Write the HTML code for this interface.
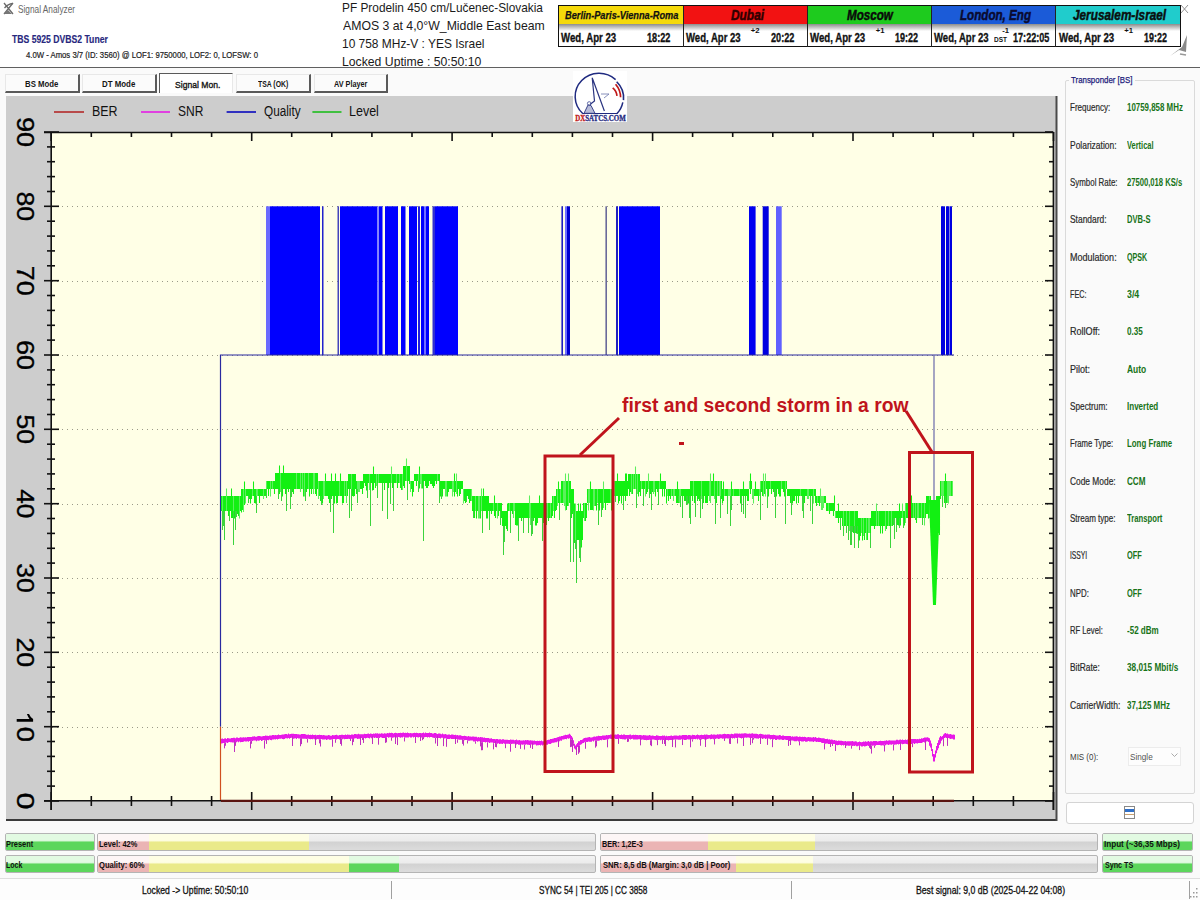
<!DOCTYPE html>
<html><head><meta charset="utf-8">
<style>
*{box-sizing:border-box}
html,body{margin:0;padding:0}
body{width:1200px;height:900px;position:relative;overflow:hidden;background:#fafafa;font-family:"Liberation Sans",sans-serif;}
.a{position:absolute;white-space:nowrap}
</style></head><body>
<div class="a" style="left:0;top:0;width:1200px;height:67px;background:#ffffff"></div><svg class="a" style="left:3px;top:2px" width="11" height="13" viewBox="0 0 11 13"><g stroke="#6a6a6a" stroke-width="1.3" fill="none"><path d="M1 1 L10 12 M10 1 L1 12"/><path d="M1.5 6 Q5 2 9.5 1.5"/></g><path d="M1 12 L5 8 L9 12 Z" fill="#777"/></svg><div class="a" style="left:17.59px;top:5px;font-size:10.17px;line-height:10.17px;color:#666;transform:scaleX(0.8147);transform-origin:0 0;">Signal Analyzer</div><div class="a" style="left:12.41px;top:35px;font-size:10.17px;line-height:10.17px;font-weight:bold;color:#28287e;transform:scaleX(0.8503);transform-origin:0 0;-webkit-text-stroke:0.15px #28287e;">TBS 5925 DVBS2 Tuner</div><div class="a" style="left:26.32px;top:51px;font-size:8.72px;line-height:8.72px;color:#222;transform:scaleX(0.8864);transform-origin:0 0;-webkit-text-stroke:0.2px #222;">4.0W - Amos 3/7 (ID: 3560) @ LOF1: 9750000, LOF2: 0, LOFSW: 0</div><div class="a" style="left:330px;top:0;width:230px;height:67px;overflow:hidden"><div class="a" style="left:11.92px;top:2px;font-size:12.06px;line-height:12.06px;color:#1a1a1a;transform:scaleX(0.9838);transform-origin:0 0;">PF Prodelin 450 cm/Lučenec-Slovakia</div><div class="a" style="left:12.90px;top:20px;font-size:12.06px;line-height:12.06px;color:#1a1a1a;transform:scaleX(1.0171);transform-origin:0 0;">AMOS 3 at 4,0°W_Middle East beam</div><div class="a" style="left:12.01px;top:38px;font-size:12.06px;line-height:12.06px;color:#1a1a1a;transform:scaleX(0.9909);transform-origin:0 0;">10 758 MHz-V : YES Israel</div><div class="a" style="left:11.89px;top:56px;font-size:12.06px;line-height:12.06px;color:#1a1a1a;transform:scaleX(1.0147);transform-origin:0 0;">Locked Uptime : 50:50:10</div></div><div class="a" style="left:558px;top:5px;width:623px;height:42px;border:1.5px solid #111;background:#fff"></div><div class="a" style="left:559px;top:6px;width:124px;height:18px;background:#f5d90a"></div><div class="a" style="left:559px;top:24px;width:124px;height:7px;background:linear-gradient(#8c8c8c,#e8e8e8 80%,#fff)"></div><div class="a" style="left:564.84px;top:10px;font-size:11.48px;line-height:11.48px;font-weight:bold;font-style:italic;color:#111;transform:scaleX(0.8041);transform-origin:0 0;-webkit-text-stroke:0.25px #111;">Berlin-Paris-Vienna-Roma</div><div class="a" style="left:683.5px;top:6px;width:123.5px;height:18px;background:#f21212"></div><div class="a" style="left:683.5px;top:24px;width:123.5px;height:7px;background:linear-gradient(#8c8c8c,#e8e8e8 80%,#fff)"></div><div class="a" style="left:682.5px;top:6px;width:1.5px;height:41px;background:#222"></div><div class="a" style="left:731.06px;top:8px;font-size:14.83px;line-height:14.83px;font-weight:bold;font-style:italic;color:#300000;transform:scaleX(0.8029);transform-origin:0 0;-webkit-text-stroke:0.5px #300000;">Dubai</div><div class="a" style="left:807.5px;top:6px;width:123.5px;height:18px;background:#1ecb1e"></div><div class="a" style="left:807.5px;top:24px;width:123.5px;height:7px;background:linear-gradient(#8c8c8c,#e8e8e8 80%,#fff)"></div><div class="a" style="left:806.5px;top:6px;width:1.5px;height:41px;background:#222"></div><div class="a" style="left:847.26px;top:8px;font-size:14.83px;line-height:14.83px;font-weight:bold;font-style:italic;color:#0a0a0a;transform:scaleX(0.7844);transform-origin:0 0;-webkit-text-stroke:0.5px #0a0a0a;">Moscow</div><div class="a" style="left:931.5px;top:6px;width:123.5px;height:18px;background:#1b5bd8"></div><div class="a" style="left:931.5px;top:24px;width:123.5px;height:7px;background:linear-gradient(#8c8c8c,#e8e8e8 80%,#fff)"></div><div class="a" style="left:930.5px;top:6px;width:1.5px;height:41px;background:#222"></div><div class="a" style="left:959.76px;top:8px;font-size:14.83px;line-height:14.83px;font-weight:bold;font-style:italic;color:#0a0a30;transform:scaleX(0.7842);transform-origin:0 0;-webkit-text-stroke:0.5px #0a0a30;">London, Eng</div><div class="a" style="left:1055.5px;top:6px;width:124.5px;height:18px;background:#20cccc"></div><div class="a" style="left:1055.5px;top:24px;width:124.5px;height:7px;background:linear-gradient(#8c8c8c,#e8e8e8 80%,#fff)"></div><div class="a" style="left:1054.5px;top:6px;width:1.5px;height:41px;background:#222"></div><div class="a" style="left:1072.84px;top:8px;font-size:14.83px;line-height:14.83px;font-weight:bold;font-style:italic;color:#0a1010;transform:scaleX(0.7956);transform-origin:0 0;-webkit-text-stroke:0.5px #0a1010;">Jerusalem-Israel</div><div class="a" style="left:561.30px;top:31px;font-size:13.37px;line-height:13.37px;font-weight:bold;color:#111;transform:scaleX(0.7218);transform-origin:0 0;-webkit-text-stroke:0.35px #111;">Wed, Apr 23</div><div class="a" style="left:646.65px;top:31px;font-size:13.37px;line-height:13.37px;font-weight:bold;color:#111;transform:scaleX(0.6839);transform-origin:0 0;-webkit-text-stroke:0.35px #111;">18:22</div><div class="a" style="left:686.40px;top:31px;font-size:13.37px;line-height:13.37px;font-weight:bold;color:#111;transform:scaleX(0.7152);transform-origin:0 0;-webkit-text-stroke:0.35px #111;">Wed, Apr 23</div><div class="a" style="left:771.26px;top:31px;font-size:13.37px;line-height:13.37px;font-weight:bold;color:#111;transform:scaleX(0.6837);transform-origin:0 0;-webkit-text-stroke:0.35px #111;">20:22</div><div class="a" style="left:750.70px;top:27px;font-size:7.70px;line-height:7.70px;font-weight:bold;color:#111;">+2</div><div class="a" style="left:810.00px;top:31px;font-size:13.37px;line-height:13.37px;font-weight:bold;color:#111;transform:scaleX(0.7218);transform-origin:0 0;-webkit-text-stroke:0.35px #111;">Wed, Apr 23</div><div class="a" style="left:895.26px;top:31px;font-size:13.37px;line-height:13.37px;font-weight:bold;color:#111;transform:scaleX(0.6748);transform-origin:0 0;-webkit-text-stroke:0.35px #111;">19:22</div><div class="a" style="left:875.70px;top:27px;font-size:7.70px;line-height:7.70px;font-weight:bold;color:#111;">+1</div><div class="a" style="left:934.25px;top:31px;font-size:13.37px;line-height:13.37px;font-weight:bold;color:#111;transform:scaleX(0.7152);transform-origin:0 0;-webkit-text-stroke:0.35px #111;">Wed, Apr 23</div><div class="a" style="left:1013.21px;top:31px;font-size:13.37px;line-height:13.37px;font-weight:bold;color:#111;transform:scaleX(0.6810);transform-origin:0 0;-webkit-text-stroke:0.35px #111;">17:22:05</div><div class="a" style="left:1002.20px;top:27px;font-size:7.70px;line-height:7.70px;font-weight:bold;color:#111;">-1</div><div class="a" style="left:1058.75px;top:31px;font-size:13.37px;line-height:13.37px;font-weight:bold;color:#111;transform:scaleX(0.7218);transform-origin:0 0;-webkit-text-stroke:0.35px #111;">Wed, Apr 23</div><div class="a" style="left:1144.47px;top:31px;font-size:13.37px;line-height:13.37px;font-weight:bold;color:#111;transform:scaleX(0.6687);transform-origin:0 0;-webkit-text-stroke:0.35px #111;">19:22</div><div class="a" style="left:1124.20px;top:27px;font-size:7.70px;line-height:7.70px;font-weight:bold;color:#111;">+1</div><div class="a" style="left:994.09px;top:36px;font-size:7.99px;line-height:7.99px;font-weight:bold;color:#111;transform:scaleX(0.8117);transform-origin:0 0;">DST</div><svg class="a" style="left:1180px;top:4px" width="9" height="10"><path d="M1 1 L8 9 M8 1 L1 9" stroke="#888" stroke-width="0.9"/></svg><svg class="a" style="left:1168px;top:34px" width="22" height="24"><path d="M19 1 L14 13 L2 22 L11 16 L18 18 Z" fill="#8a8a8a"/><path d="M12 20 L18 21" stroke="#999" stroke-width="1.6"/></svg><div class="a" style="left:0;top:67px;width:1200px;height:1.2px;background:#606060"></div><div class="a" style="left:5px;top:73.5px;width:74.5px;height:19.5px;background:#fbfbfb;border-top:1px solid #e8e8e8;border-left:1px solid #e8e8e8;border-right:2px solid #5a5a5a;border-bottom:2px solid #5a5a5a"></div><div class="a" style="left:25.02px;top:79px;font-size:9.74px;line-height:9.74px;font-weight:bold;color:#151515;transform:scaleX(0.8005);transform-origin:0 0;">BS Mode</div><div class="a" style="left:82px;top:73.5px;width:75px;height:19.5px;background:#fbfbfb;border-top:1px solid #e8e8e8;border-left:1px solid #e8e8e8;border-right:2px solid #5a5a5a;border-bottom:2px solid #5a5a5a"></div><div class="a" style="left:102.01px;top:79px;font-size:9.74px;line-height:9.74px;font-weight:bold;color:#151515;transform:scaleX(0.8105);transform-origin:0 0;">DT Mode</div><div class="a" style="left:158.5px;top:73px;width:74.5px;height:20px;background:#fff;border-top:1.6px solid #5a5a5a;border-left:1.2px solid #5a5a5a;border-right:1px solid #e8e8e8"></div><div class="a" style="left:174.57px;top:80px;font-size:9.88px;line-height:9.88px;color:#111;transform:scaleX(0.8694);transform-origin:0 0;-webkit-text-stroke:0.35px #111;">Signal Mon.</div><div class="a" style="left:236.3px;top:73.5px;width:74.5px;height:19.5px;background:#fbfbfb;border-top:1px solid #e8e8e8;border-left:1px solid #e8e8e8;border-right:2px solid #5a5a5a;border-bottom:2px solid #5a5a5a"></div><div class="a" style="left:258.23px;top:79px;font-size:9.74px;line-height:9.74px;font-weight:bold;color:#151515;transform:scaleX(0.7038);transform-origin:0 0;">TSA (OK)</div><div class="a" style="left:313.8px;top:73.5px;width:74.19999999999999px;height:19.5px;background:#fbfbfb;border-top:1px solid #e8e8e8;border-left:1px solid #e8e8e8;border-right:2px solid #5a5a5a;border-bottom:2px solid #5a5a5a"></div><div class="a" style="left:334.05px;top:79px;font-size:9.74px;line-height:9.74px;font-weight:bold;color:#151515;transform:scaleX(0.7466);transform-origin:0 0;">AV Player</div><svg class="a" style="left:0;top:0" width="1200" height="900"><rect x="6" y="96" width="1051" height="724" fill="#cdcdcd"/><line x1="6" y1="820" x2="1057" y2="820" stroke="#3a3a3a" stroke-width="2"/><line x1="1056.5" y1="96" x2="1056.5" y2="821" stroke="#4a4a4a" stroke-width="2"/><rect x="51" y="132" width="1003" height="669" fill="#ffffe6"/><line x1="52" y1="727.5" x2="1053" y2="727.5" stroke="#9a9a88" stroke-width="1" stroke-dasharray="1 4"/><line x1="52" y1="652.5" x2="1053" y2="652.5" stroke="#9a9a88" stroke-width="1" stroke-dasharray="1 4"/><line x1="52" y1="578.5" x2="1053" y2="578.5" stroke="#9a9a88" stroke-width="1" stroke-dasharray="1 4"/><line x1="52" y1="504.5" x2="1053" y2="504.5" stroke="#9a9a88" stroke-width="1" stroke-dasharray="1 4"/><line x1="52" y1="429.5" x2="1053" y2="429.5" stroke="#9a9a88" stroke-width="1" stroke-dasharray="1 4"/><line x1="52" y1="355.5" x2="1053" y2="355.5" stroke="#9a9a88" stroke-width="1" stroke-dasharray="1 4"/><line x1="52" y1="281.5" x2="1053" y2="281.5" stroke="#9a9a88" stroke-width="1" stroke-dasharray="1 4"/><line x1="52" y1="206.5" x2="1053" y2="206.5" stroke="#9a9a88" stroke-width="1" stroke-dasharray="1 4"/><rect x="266" y="206.3" width="4.0" height="148.7" fill="#6a6aff"/><rect x="270" y="206.3" width="50.0" height="148.7" fill="#0000ff"/><rect x="322" y="206.3" width="1.5" height="148.7" fill="#2222cc"/><rect x="337.5" y="206.3" width="1.5" height="148.7" fill="#4444bb"/><rect x="340" y="206.3" width="37.5" height="148.7" fill="#0000ff"/><rect x="377.5" y="206.3" width="1.5" height="148.7" fill="#8888ff"/><rect x="379" y="206.3" width="3.5" height="148.7" fill="#0000ff"/><rect x="385" y="206.3" width="13.0" height="148.7" fill="#0000ff"/><rect x="401" y="206.3" width="4.5" height="148.7" fill="#0000ff"/><rect x="409" y="206.3" width="8.0" height="148.7" fill="#0000ff"/><rect x="418" y="206.3" width="2.0" height="148.7" fill="#2020e0"/><rect x="421" y="206.3" width="3.0" height="148.7" fill="#0000ff"/><rect x="424" y="206.3" width="2.0" height="148.7" fill="#7070ff"/><rect x="426" y="206.3" width="3.0" height="148.7" fill="#0000ff"/><rect x="432.5" y="206.3" width="2.5" height="148.7" fill="#3030d0"/><rect x="435" y="206.3" width="23.0" height="148.7" fill="#0000ff"/><rect x="561.4" y="206.3" width="1.6" height="148.7" fill="#2020c0"/><rect x="565" y="206.3" width="2.0" height="148.7" fill="#7070ff"/><rect x="567" y="206.3" width="3.0" height="148.7" fill="#0000d0"/><rect x="605.4" y="206.3" width="1.6" height="148.7" fill="#6a6a9a"/><rect x="616" y="206.3" width="2.0" height="148.7" fill="#2020c0"/><rect x="619" y="206.3" width="41.0" height="148.7" fill="#0000ff"/><rect x="749" y="206.3" width="6.6" height="148.7" fill="#0000f0"/><rect x="762.7" y="206.3" width="6.0" height="148.7" fill="#0000e0"/><rect x="776" y="206.3" width="5.7" height="148.7" fill="#6060ff"/><rect x="941" y="206.3" width="4.0" height="148.7" fill="#0000e0"/><rect x="946" y="206.3" width="3.0" height="148.7" fill="#0000e0"/><rect x="949.5" y="206.3" width="2.5" height="148.7" fill="#0000e0"/><polyline points="220.5,726.7 220.5,355.0 954,355.0" fill="none" stroke="#2a2aa0" stroke-width="1.2"/><line x1="934" y1="355.0" x2="934" y2="504" stroke="#6a6aaa" stroke-width="1.2"/><line x1="220.5" y1="801" x2="220.5" y2="726.7" stroke="#d05020" stroke-width="1.2"/><path d="M221.5,496.0V511.0M223.5,496.0V511.0M224.5,496.0V514.0M225.5,496.0V511.0M227.5,496.0V511.0M228.5,496.0V516.0M229.5,496.0V511.0M230.5,496.0V511.0M231.5,488.6V518.0M232.5,496.0V518.0M234.5,496.0V518.4M235.5,496.0V511.0M236.5,496.0V511.0M237.5,496.0V514.0M238.5,496.0V516.0M240.5,496.0V511.0M241.5,489.0V512.4M242.5,489.0V510.0M244.5,481.6V505.0M246.5,489.0V496.0M247.5,489.0V496.0M248.5,489.0V496.0M249.5,489.0V499.0M250.5,489.0V503.4M251.5,489.0V499.0M253.5,481.6V496.0M254.5,489.0V503.0M255.5,489.0V503.4M258.5,489.0V496.0M259.5,489.0V503.0M260.5,489.0V496.0M261.5,489.0V496.0M262.5,489.0V496.0M264.5,489.0V496.0M265.5,489.0V496.0M267.5,481.0V489.0M268.5,481.0V496.0M269.5,481.0V489.0M271.5,481.0V489.0M273.5,481.0V489.0M274.5,481.0V494.0M275.5,473.0V489.0M276.5,473.0V489.0M277.5,473.0V489.0M278.5,473.0V496.0M279.5,465.6V494.0M281.5,473.0V489.0M282.5,473.0V496.4M283.5,465.6V489.0M284.5,473.0V489.0M285.5,473.0V494.0M286.5,473.0V496.4M287.5,473.0V489.0M288.5,473.0V492.0M289.5,473.0V489.0M290.5,473.0V489.0M291.5,473.0V496.4M292.5,473.0V492.0M293.5,473.0V494.0M294.5,473.0V489.0M295.5,473.0V489.0M297.5,473.0V489.0M298.5,473.0V489.0M299.5,473.0V489.0M301.5,473.0V489.0M303.5,473.0V496.4M305.5,473.0V496.0M306.5,473.0V492.0M307.5,473.0V489.0M309.5,473.0V496.4M310.5,473.0V489.0M311.5,473.0V494.0M312.5,473.0V489.0M315.5,473.0V494.0M316.5,473.0V496.0M317.5,473.0V489.0M319.5,481.0V496.0M320.5,481.0V501.0M321.5,481.0V499.0M322.5,481.0V503.4M325.5,473.6V496.0M326.5,481.0V496.0M327.5,481.0V496.0M328.5,481.0V499.0M329.5,481.0V503.0M330.5,481.0V496.0M331.5,473.6V499.0M332.5,481.0V496.0M333.5,481.0V503.4M334.5,481.0V503.4M335.5,473.6V496.0M336.5,481.0V503.4M337.5,481.0V503.0M338.5,481.0V496.0M340.5,473.6V496.0M341.5,481.0V496.0M342.5,481.0V503.4M343.5,481.0V503.0M345.5,481.0V496.0M347.5,481.0V496.0M348.5,474.0V489.0M349.5,474.0V489.0M350.5,474.0V489.0M352.5,474.0V496.0M353.5,474.0V496.4M354.5,474.0V496.0M355.5,474.0V489.0M356.5,481.0V494.0M360.5,481.0V489.0M361.5,481.0V489.0M362.5,481.0V494.0M363.5,474.0V488.0M364.5,474.0V483.0M365.5,474.0V486.0M366.5,474.0V490.4M367.5,474.0V490.0M368.5,474.0V483.0M370.5,474.0V483.0M371.5,474.0V483.0M372.5,474.0V490.4M373.5,466.6V490.0M374.5,474.0V483.0M375.5,474.0V488.0M377.5,474.0V486.0M379.5,474.0V483.0M380.5,474.0V483.0M381.5,474.0V483.0M382.5,474.0V490.0M383.5,474.0V483.0M384.5,474.0V490.0M385.5,474.0V483.0M386.5,474.0V483.0M387.5,474.0V488.0M388.5,474.0V488.0M389.5,474.0V483.0M390.5,474.0V488.0M392.5,474.0V488.0M393.5,474.0V490.0M394.5,474.0V483.0M395.5,474.0V483.0M397.5,474.0V488.0M398.5,474.0V483.0M400.5,474.0V488.0M401.5,474.0V490.0M403.5,466.0V486.0M404.5,466.0V488.0M405.5,466.0V481.0M407.5,466.0V481.0M408.5,466.0V481.0M409.5,466.0V484.0M411.5,481.0V489.0M412.5,481.0V496.4M413.5,481.0V492.0M414.5,474.0V481.0M415.5,474.0V481.0M416.5,474.0V486.0M417.5,474.0V481.0M419.5,466.6V488.4M422.5,474.0V488.4M423.5,474.0V481.0M424.5,474.0V481.0M425.5,474.0V486.0M426.5,474.0V488.0M427.5,474.0V488.0M428.5,474.0V486.0M429.5,474.0V481.0M430.5,474.0V484.0M431.5,474.0V484.0M432.5,474.0V486.0M433.5,474.0V488.0M434.5,474.0V486.0M435.5,474.0V481.0M436.5,474.0V484.0M438.5,474.0V481.0M439.5,474.0V481.0M440.5,481.0V496.4M441.5,481.0V489.0M442.5,481.0V496.4M443.5,481.0V489.0M444.5,481.0V489.0M447.5,481.0V496.4M448.5,481.0V492.0M449.5,481.0V489.0M450.5,481.0V489.0M451.5,481.0V489.0M454.5,473.6V496.4M455.5,481.0V492.0M457.5,481.0V496.4M458.5,481.0V489.0M459.5,481.0V496.0M460.5,481.0V494.0M461.5,481.0V489.0M462.5,481.0V489.0M464.5,489.0V501.0M465.5,489.0V503.0M466.5,489.0V496.0M467.5,489.0V496.0M468.5,489.0V499.0M469.5,489.0V503.0M470.5,489.0V501.0M472.5,496.0V511.0M473.5,496.0V518.0M474.5,496.0V518.0M476.5,496.0V518.4M477.5,496.0V511.0M480.5,496.0V518.4M482.5,496.0V511.0M483.5,488.6V511.0M484.5,496.0V511.0M485.5,496.0V511.0M486.5,496.0V518.4M487.5,496.0V518.4M488.5,496.0V511.0M489.5,503.0V518.4M490.5,503.0V511.0M491.5,503.0V514.0M492.5,503.0V511.0M494.5,495.6V516.0M495.5,503.0V518.0M496.5,503.0V511.0M498.5,503.0V516.0M499.5,503.0V511.0M500.5,503.0V518.4M501.5,503.0V518.0M502.5,511.0V526.0M503.5,511.0V529.0M504.5,511.0V531.0M505.5,511.0V526.0M506.5,511.0V529.0M507.5,503.6V531.0M508.5,503.0V511.0M510.5,503.0V518.4M511.5,503.0V511.0M512.5,503.0V514.0M515.5,503.0V525.0M516.5,503.0V525.4M517.5,503.0V525.4M518.5,503.0V518.0M519.5,503.0V518.0M520.5,503.0V518.0M521.5,503.0V521.0M522.5,503.0V518.0M523.5,503.0V521.0M524.5,503.0V518.0M525.5,503.0V518.0M526.5,503.0V518.0M527.5,503.0V518.0M528.5,503.0V518.0M531.5,503.0V525.0M532.5,503.0V525.4M533.5,503.0V521.0M534.5,503.0V518.0M535.5,503.0V525.4M536.5,503.0V525.4M537.5,503.0V523.0M538.5,503.0V518.0M539.5,495.6V518.0M540.5,503.0V518.0M541.5,503.0V518.0M542.5,503.0V518.0M543.5,503.0V523.0M544.5,503.0V518.0M546.5,503.0V525.0M548.5,503.0V521.0M549.5,503.0V518.0M551.5,503.0V518.0M552.5,496.0V516.0M554.5,496.0V518.0M555.5,496.0V511.0M556.5,489.0V510.0M558.5,481.6V503.0M559.5,489.0V503.0M561.5,481.0V503.0M562.5,481.0V503.0M566.5,481.0V510.0M567.5,481.0V506.0M569.5,481.0V503.0M570.5,481.0V503.0M571.5,489.0V518.0M572.5,489.0V514.0M573.5,489.0V514.0M574.5,503.6V543.0M576.5,511.0V540.0M577.5,511.0V540.0M578.5,503.6V540.0M579.5,511.0V540.0M580.5,503.6V540.0M581.5,511.0V547.4M582.5,511.0V540.0M583.5,503.0V518.0M585.5,503.0V521.0M586.5,503.0V518.0M587.5,489.0V503.0M590.5,481.6V510.0M591.5,489.0V510.0M592.5,489.0V510.0M595.5,489.0V506.0M596.5,489.0V510.4M598.5,489.0V510.0M599.5,489.0V510.4M600.5,489.0V503.0M601.5,489.0V508.0M602.5,489.0V510.0M604.5,489.0V503.0M605.5,489.0V510.0M606.5,489.0V503.0M607.5,489.0V503.0M608.5,489.0V503.0M609.5,489.0V503.0M611.5,489.0V510.4M612.5,473.6V501.0M613.5,481.0V496.0M615.5,481.0V496.0M616.5,481.0V496.0M617.5,473.6V496.0M618.5,481.0V503.4M619.5,481.0V501.0M620.5,481.0V496.0M621.5,481.0V503.4M622.5,481.0V496.0M623.5,481.0V496.0M624.5,481.0V496.0M625.5,473.6V501.0M626.5,473.6V496.0M627.5,481.0V496.0M628.5,474.0V489.0M629.5,474.0V496.0M630.5,474.0V492.0M632.5,474.0V494.0M634.5,474.0V489.0M636.5,474.0V489.0M638.5,474.0V496.4M639.5,474.0V492.0M640.5,481.0V496.0M642.5,481.0V489.0M643.5,481.0V489.0M644.5,481.0V489.0M646.5,481.0V494.0M647.5,481.0V492.0M649.5,481.0V496.4M650.5,481.0V494.0M651.5,481.0V489.0M652.5,481.0V492.0M655.5,481.0V496.4M656.5,481.0V489.0M657.5,481.0V492.0M658.5,481.0V489.0M660.5,473.6V489.0M661.5,481.0V489.0M662.5,481.0V496.4M663.5,481.0V489.0M664.5,481.0V496.4M665.5,481.0V489.0M666.5,489.0V503.4M668.5,489.0V501.0M669.5,489.0V496.0M670.5,489.0V499.0M672.5,489.0V496.0M675.5,489.0V496.0M676.5,489.0V503.0M677.5,481.6V503.0M678.5,489.0V503.0M681.5,489.0V496.0M682.5,489.0V499.0M683.5,489.0V496.0M684.5,489.0V501.0M685.5,489.0V501.0M686.5,489.0V496.0M687.5,489.0V503.0M688.5,489.0V503.4M689.5,489.0V496.0M690.5,481.0V496.0M691.5,481.0V496.0M692.5,481.0V501.0M694.5,481.0V503.0M695.5,481.0V496.0M696.5,481.0V496.0M697.5,481.0V501.0M698.5,481.0V499.0M699.5,481.0V501.0M700.5,481.0V496.0M702.5,481.0V503.0M703.5,481.0V503.0M704.5,481.0V496.0M705.5,481.0V503.0M706.5,481.0V503.0M707.5,481.0V503.0M708.5,481.0V496.0M711.5,481.0V496.0M712.5,481.0V496.0M713.5,473.6V496.0M715.5,481.0V501.0M716.5,481.0V503.0M718.5,481.0V496.0M721.5,481.0V499.0M722.5,489.0V503.4M723.5,481.6V501.0M725.5,489.0V496.0M726.5,489.0V496.0M727.5,489.0V501.0M731.5,481.6V503.0M732.5,489.0V496.0M734.5,489.0V496.0M735.5,489.0V496.0M736.5,489.0V496.0M737.5,489.0V496.0M738.5,489.0V496.0M740.5,489.0V503.4M741.5,489.0V496.0M742.5,489.0V496.0M743.5,481.6V503.4M744.5,489.0V496.0M745.5,489.0V499.0M746.5,489.0V496.0M747.5,489.0V501.0M748.5,489.0V501.0M750.5,473.6V494.0M751.5,481.0V489.0M754.5,489.0V496.0M755.5,481.6V496.0M756.5,489.0V496.0M757.5,489.0V496.0M758.5,489.0V501.0M761.5,481.0V492.0M762.5,481.0V496.0M764.5,481.0V494.0M766.5,481.0V489.0M767.5,481.0V494.0M768.5,481.0V496.4M769.5,481.0V489.0M771.5,481.0V494.0M772.5,481.0V489.0M773.5,481.0V492.0M774.5,481.0V489.0M775.5,481.0V496.4M776.5,481.0V496.4M777.5,481.0V489.0M778.5,481.0V494.0M779.5,481.0V496.4M780.5,481.0V496.4M782.5,481.0V489.0M783.5,481.0V492.0M784.5,481.0V496.4M786.5,481.0V489.0M787.5,489.0V496.0M788.5,489.0V496.0M789.5,489.0V496.0M790.5,489.0V503.0M791.5,489.0V496.0M792.5,489.0V503.4M793.5,489.0V501.0M794.5,489.0V501.0M795.5,489.0V496.0M796.5,489.0V503.4M797.5,489.0V496.0M798.5,489.0V503.0M799.5,489.0V496.0M801.5,489.0V496.0M802.5,489.0V496.0M803.5,489.0V496.0M804.5,489.0V503.0M805.5,489.0V496.0M806.5,489.0V496.0M809.5,489.0V496.0M810.5,489.0V501.0M811.5,489.0V496.0M812.5,489.0V496.0M814.5,489.0V496.0M815.5,489.0V503.0M816.5,496.0V506.0M818.5,496.0V503.0M819.5,496.0V506.0M824.5,496.0V503.0M825.5,496.0V503.0M826.5,503.0V511.0M827.5,503.0V511.0M829.5,503.0V514.0M830.5,503.0V511.0M831.5,503.0V511.0M832.5,503.0V511.0M833.5,503.0V516.0M834.5,495.6V511.0M836.5,511.0V518.0M837.5,511.0V518.0M838.5,503.6V523.0M839.5,511.0V518.0M840.5,511.0V518.0M841.5,511.0V518.0M842.5,511.0V526.0M844.5,511.0V526.0M845.5,511.0V526.0M847.5,511.0V526.0M848.5,511.0V531.0M850.5,511.0V533.0M851.5,511.0V533.4M852.5,511.0V526.0M853.5,511.0V533.0M855.5,511.0V531.0M856.5,511.0V533.4M857.5,511.0V526.0M858.5,518.0V538.0M859.5,518.0V540.4M860.5,518.0V536.0M862.5,518.0V540.4M864.5,518.0V540.0M865.5,518.0V533.0M867.5,518.0V540.0M870.5,518.0V533.0M871.5,511.0V526.0M872.5,511.0V526.0M873.5,511.0V526.0M874.5,511.0V529.0M875.5,511.0V526.0M877.5,511.0V526.0M879.5,511.0V526.0M880.5,511.0V533.4M881.5,511.0V526.0M882.5,511.0V533.4M883.5,511.0V526.0M884.5,511.0V526.0M886.5,511.0V529.0M887.5,511.0V526.0M889.5,511.0V526.0M890.5,511.0V533.0M892.5,511.0V526.0M893.5,511.0V518.0M894.5,511.0V525.0M895.5,511.0V518.0M896.5,511.0V523.0M897.5,511.0V525.0M898.5,511.0V525.4M899.5,503.6V521.0M900.5,511.0V525.4M901.5,511.0V518.0M903.5,511.0V521.0M904.5,511.0V525.4M906.5,503.0V518.0M907.5,503.0V518.0M908.5,503.0V518.0M910.5,503.0V521.0M911.5,495.6V518.0M912.5,503.0V518.0M914.5,503.0V518.0M916.5,503.0V523.0M919.5,503.0V518.0M920.5,503.0V518.0M922.5,503.0V518.0M923.5,503.0V518.0M925.5,503.0V518.0M926.5,496.0V514.0M927.5,496.0V514.0M928.5,496.0V518.4M930.5,496.0V514.0M936.5,496.0V537.4M937.5,496.0V530.0M938.5,496.0V533.0M939.5,496.0V535.0M940.5,481.0V499.0M944.5,481.0V503.0M945.5,473.6V503.4M946.5,481.0V503.0M951.5,481.0V496.0" stroke="#12f012" stroke-width="1.05" fill="none"/><path d="M222.5,496.0V511.0M226.5,488.6V511.0M233.5,496.0V516.0M239.5,496.0V518.4M243.5,489.0V512.0M245.5,489.0V503.4M252.5,489.0V496.0M256.5,489.0V496.0M257.5,489.0V496.0M263.5,489.0V499.0M266.5,481.0V492.0M270.5,481.0V496.4M272.5,481.0V489.0M280.5,473.0V492.0M296.5,473.0V489.0M300.5,473.0V492.0M302.5,473.0V489.0M304.5,473.0V496.4M308.5,473.0V489.0M313.5,473.0V494.0M314.5,473.0V489.0M318.5,481.0V499.0M323.5,481.0V499.0M324.5,481.0V496.0M339.5,481.0V496.0M344.5,481.0V496.0M346.5,481.0V503.0M351.5,474.0V489.0M357.5,481.0V494.0M358.5,481.0V492.0M359.5,481.0V492.0M369.5,474.0V490.0M376.5,474.0V486.0M378.5,474.0V483.0M391.5,466.6V483.0M396.5,474.0V483.0M399.5,474.0V483.0M402.5,474.0V490.0M406.5,458.6V481.0M410.5,481.0V492.0M418.5,474.0V481.0M420.5,474.0V484.0M421.5,474.0V488.4M437.5,474.0V481.0M445.5,481.0V496.4M446.5,481.0V496.4M452.5,481.0V496.4M453.5,481.0V492.0M456.5,473.6V494.0M463.5,489.0V503.4M471.5,489.0V501.0M475.5,496.0V511.0M478.5,496.0V518.4M479.5,496.0V518.4M481.5,488.6V511.0M493.5,503.0V511.0M497.5,503.0V518.4M509.5,503.0V511.0M513.5,503.0V518.0M514.5,503.0V511.0M529.5,495.6V518.0M530.5,503.0V525.0M545.5,503.0V525.0M547.5,503.0V518.0M550.5,503.0V518.0M553.5,496.0V511.0M557.5,489.0V506.0M560.5,489.0V503.0M563.5,481.0V503.0M564.5,481.0V506.0M565.5,473.6V510.4M568.5,473.6V506.0M575.5,503.6V545.0M584.5,503.0V521.0M588.5,489.0V510.4M589.5,489.0V503.0M593.5,489.0V510.4M594.5,489.0V506.0M597.5,489.0V503.0M603.5,481.6V508.0M610.5,489.0V503.0M614.5,481.0V496.0M631.5,474.0V494.0M633.5,474.0V489.0M635.5,466.6V489.0M637.5,474.0V494.0M641.5,481.0V489.0M645.5,481.0V496.4M648.5,473.6V489.0M653.5,481.0V494.0M654.5,481.0V492.0M659.5,481.0V489.0M667.5,489.0V496.0M671.5,489.0V496.0M673.5,489.0V501.0M674.5,489.0V496.0M679.5,489.0V503.0M680.5,489.0V496.0M693.5,481.0V496.0M701.5,481.0V499.0M709.5,481.0V501.0M710.5,473.6V503.0M714.5,481.0V499.0M717.5,481.0V496.0M719.5,481.0V496.0M720.5,481.0V496.0M724.5,489.0V496.0M728.5,489.0V496.0M729.5,489.0V496.0M730.5,489.0V496.0M733.5,489.0V496.0M739.5,489.0V496.0M749.5,481.0V489.0M752.5,489.0V499.0M753.5,489.0V503.4M759.5,489.0V496.0M760.5,481.0V489.0M763.5,473.6V496.4M765.5,473.6V496.4M770.5,481.0V489.0M781.5,481.0V489.0M785.5,481.0V496.0M800.5,489.0V496.0M807.5,489.0V499.0M808.5,489.0V499.0M813.5,489.0V503.4M817.5,496.0V503.0M820.5,488.6V503.0M821.5,496.0V510.0M822.5,496.0V510.0M823.5,496.0V508.0M828.5,503.0V511.0M835.5,511.0V518.0M843.5,511.0V531.0M846.5,511.0V526.0M849.5,511.0V531.0M854.5,511.0V526.0M861.5,518.0V533.0M863.5,518.0V536.0M866.5,518.0V540.0M868.5,518.0V533.0M869.5,518.0V533.0M876.5,503.6V526.0M878.5,511.0V526.0M885.5,511.0V531.0M888.5,511.0V526.0M891.5,511.0V526.0M902.5,503.6V518.0M905.5,503.0V523.0M909.5,503.0V518.0M913.5,503.0V518.0M915.5,503.0V518.0M917.5,503.0V518.0M918.5,503.0V518.0M921.5,503.0V518.0M924.5,503.0V525.4M929.5,496.0V518.0M941.5,481.0V496.0M942.5,481.0V503.4M943.5,481.0V496.0M947.5,481.0V503.0M948.5,481.0V503.4M949.5,481.0V496.0M950.5,481.0V496.0M952.5,481.0V496.0" stroke="#5cf05c" stroke-width="1.05" fill="none"/><path d="M222.5,511.0V530M223.5,511.0V526M224.5,511.0V540M229.5,511.0V521M233.5,511.0V545M235.5,511.0V530M236.5,511.0V517M248.5,496.0V503M256.5,496.0V513M266.5,489.0V498M278.5,489.0V499M281.5,489.0V501M286.5,489.0V511M290.5,489.0V509M291.5,489.0V497M305.5,489.0V501M321.5,496.0V505M330.5,496.0V512M333.5,496.0V533M349.5,489.0V518M351.5,489.0V511M357.5,489.0V503M367.5,483.0V498M370.5,483.0V526M377.5,483.0V498M382.5,483.0V511M387.5,483.0V519M390.5,483.0V504M393.5,483.0V511M407.5,481.0V500M418.5,481.0V492M423.5,481.0V541M439.5,481.0V503M441.5,489.0V499M466.5,496.0V502M473.5,511.0V518M482.5,511.0V533M489.5,511.0V530M500.5,511.0V525M503.5,526.0V555M504.5,526.0V542M510.5,511.0V533M518.5,518.0V541M523.5,518.0V533M528.5,518.0V533M531.5,518.0V536M532.5,518.0V534M542.5,518.0V541M545.5,518.0V528M559.5,503.0V520M570.5,503.0V562M573.5,511.0V562M575.5,540.0V549M576.5,540.0V583M579.5,540.0V558M580.5,540.0V562M598.5,503.0V525M601.5,503.0V517M615.5,496.0V502M623.5,496.0V510M636.5,489.0V508M643.5,489.0V506M649.5,489.0V498M651.5,489.0V510M658.5,489.0V505M678.5,496.0V502M680.5,496.0V507M682.5,496.0V518M686.5,496.0V505M687.5,496.0V504M689.5,496.0V518M690.5,496.0V524M695.5,496.0V517M700.5,496.0V518M702.5,496.0V509M715.5,496.0V524M720.5,496.0V518M727.5,496.0V514M730.5,496.0V526M731.5,496.0V510M741.5,496.0V512M743.5,496.0V514M745.5,496.0V518M760.5,489.0V520M767.5,489.0V508M774.5,489.0V497M775.5,489.0V518M785.5,489.0V524M791.5,496.0V515M802.5,496.0V511M803.5,496.0V518M810.5,496.0V511M812.5,496.0V524M840.5,518.0V530M843.5,526.0V536M846.5,526.0V533M848.5,526.0V540M850.5,526.0V545M851.5,526.0V545M852.5,526.0V532M854.5,526.0V548M855.5,526.0V533M857.5,526.0V534M858.5,533.0V548M870.5,533.0V548M890.5,526.0V548M893.5,518.0V525M894.5,518.0V539M896.5,518.0V532M899.5,518.0V528M903.5,518.0V528M910.5,518.0V530M915.5,518.0V520M922.5,518.0V525M942.5,496.0V507M945.5,496.0V508" stroke="#3cd43c" stroke-width="1" fill="none"/><polygon points="929,500 933,605 936,605 940,500" fill="#12f012"/><path d="M221.5,738.8V743.4M222.5,738.4V743.3M223.5,739.1V743.0M224.5,738.5V743.4M225.5,738.3V742.8M226.5,738.9V742.5M227.5,738.1V743.0M228.5,738.2V742.3M229.5,738.6V742.1M230.5,738.5V742.3M231.5,737.9V742.3M232.5,738.1V742.6M233.5,737.7V742.5M234.5,737.7V742.1M235.5,738.2V741.9M236.5,737.6V742.2M237.5,737.6V741.6M238.5,737.9V742.2M239.5,737.7V741.6M240.5,737.2V742.3M241.5,737.6V741.9M242.5,737.5V742.1M243.5,737.2V741.8M244.5,737.6V741.3M245.5,737.3V741.5M246.5,737.4V741.4M247.5,736.9V741.3M248.5,737.1V741.8M249.5,736.9V741.1M250.5,737.1V741.4M251.5,737.0V740.8M252.5,736.6V740.9M253.5,736.5V740.6M254.5,736.3V740.4M255.5,736.7V740.6M256.5,736.8V741.3M257.5,736.2V740.5M258.5,736.0V740.7M259.5,736.0V740.5M260.5,736.3V740.1M261.5,736.4V740.9M262.5,736.3V740.4M263.5,735.9V740.1M264.5,736.0V740.6M265.5,735.5V740.6M266.5,735.8V739.9M267.5,735.7V740.0M268.5,736.0V740.2M269.5,735.5V739.4M270.5,735.4V739.9M271.5,735.6V740.2M272.5,734.9V739.4M273.5,734.9V739.5M274.5,735.3V739.2M275.5,735.1V739.5M276.5,735.2V739.1M277.5,735.0V739.6M278.5,734.5V739.1M279.5,734.9V738.7M280.5,734.9V738.8M281.5,734.8V738.5M282.5,734.6V738.9M283.5,734.4V739.2M284.5,734.3V739.0M285.5,733.9V738.3M286.5,734.1V738.2M287.5,734.4V738.6M288.5,733.6V738.0M289.5,734.3V738.7M290.5,733.9V738.1M291.5,733.8V737.8M292.5,733.8V738.2M293.5,733.7V738.7M294.5,733.9V738.4M295.5,734.1V738.2M296.5,734.1V738.9M297.5,734.3V738.1M298.5,734.2V738.6M299.5,734.5V738.4M300.5,734.5V738.2M301.5,734.0V738.1M302.5,734.0V738.7M303.5,734.1V738.8M304.5,734.1V738.7M305.5,734.3V738.7M306.5,734.8V738.9M307.5,734.7V738.6M308.5,734.6V738.7M309.5,734.9V739.1M310.5,734.8V739.3M311.5,735.1V739.0M312.5,734.4V739.3M313.5,735.0V738.7M314.5,735.0V739.2M315.5,734.7V739.3M316.5,735.2V739.5M317.5,734.9V739.1M318.5,734.9V739.2M319.5,734.8V739.4M320.5,735.0V739.5M321.5,735.0V738.9M322.5,735.2V739.5M323.5,735.1V739.4M324.5,735.3V739.4M325.5,735.5V739.3M326.5,735.6V739.9M327.5,735.4V739.4M328.5,735.0V739.3M329.5,735.3V739.7M330.5,735.7V739.8M331.5,735.7V739.4M332.5,735.1V739.8M333.5,735.3V739.1M334.5,735.2V739.1M335.5,735.1V739.8M336.5,734.7V739.6M337.5,735.3V739.1M338.5,735.4V739.0M339.5,734.9V739.5M340.5,734.9V738.9M341.5,734.8V738.7M342.5,734.8V739.2M343.5,734.9V738.7M344.5,735.1V739.2M345.5,734.4V739.1M346.5,734.9V739.0M347.5,734.4V739.0M348.5,734.8V738.8M349.5,734.8V739.1M350.5,734.9V739.0M351.5,734.5V738.7M352.5,734.5V739.2M353.5,734.8V738.9M354.5,734.0V738.6M355.5,734.1V738.2M356.5,734.3V738.3M357.5,734.3V738.9M358.5,733.8V738.7M359.5,734.2V738.7M360.5,734.3V738.5M361.5,734.2V737.9M362.5,734.2V738.0M363.5,734.3V738.0M364.5,733.8V738.1M365.5,734.0V738.6M366.5,734.0V738.1M367.5,733.7V737.7M368.5,733.5V738.1M369.5,734.1V738.4M370.5,733.6V737.6M371.5,733.8V738.3M372.5,734.0V737.5M373.5,733.4V737.6M374.5,733.8V737.9M375.5,733.2V737.4M376.5,733.5V738.0M377.5,733.2V738.0M378.5,733.8V737.7M379.5,733.5V738.1M380.5,733.7V737.3M381.5,733.2V737.5M382.5,733.4V737.9M383.5,733.7V738.0M384.5,733.3V738.1M385.5,733.5V737.9M386.5,733.6V737.3M387.5,733.0V737.1M388.5,733.3V737.7M389.5,732.8V737.2M390.5,733.1V737.2M391.5,732.8V737.7M392.5,733.0V737.8M393.5,733.5V737.4M394.5,733.0V737.2M395.5,732.8V737.7M396.5,733.0V737.6M397.5,733.3V737.1M398.5,733.1V737.1M399.5,732.9V737.2M400.5,732.7V737.7M401.5,733.1V737.2M402.5,732.7V737.5M403.5,732.6V736.8M404.5,733.0V737.5M405.5,732.8V737.5M406.5,732.9V737.5M407.5,732.5V737.4M408.5,733.1V737.5M409.5,733.2V736.8M410.5,733.1V737.4M411.5,733.2V737.5M412.5,733.3V736.8M413.5,733.0V737.6M414.5,732.8V736.9M415.5,733.0V737.0M416.5,732.8V736.9M417.5,733.1V737.3M418.5,733.2V737.5M419.5,733.0V737.0M420.5,733.1V737.3M421.5,733.3V737.4M422.5,732.9V737.2M423.5,732.6V737.1M424.5,733.3V737.3M425.5,732.6V737.1M426.5,733.1V736.9M427.5,733.0V737.5M428.5,733.0V736.9M429.5,732.6V737.5M430.5,733.0V736.9M431.5,733.0V736.9M432.5,733.4V737.6M433.5,733.4V737.8M434.5,733.1V737.9M435.5,733.1V737.5M436.5,733.4V737.9M437.5,733.9V738.0M438.5,733.6V737.9M439.5,733.5V737.9M440.5,733.7V738.5M441.5,734.2V737.8M442.5,733.6V737.8M443.5,734.3V738.1M444.5,734.2V738.5M445.5,734.0V738.3M446.5,734.5V738.8M447.5,734.7V739.1M448.5,734.6V739.0M449.5,734.4V738.9M450.5,734.9V738.5M451.5,734.5V738.9M452.5,734.6V739.0M453.5,734.8V738.9M454.5,735.1V739.1M455.5,734.7V739.5M456.5,735.3V739.0M457.5,735.0V739.8M458.5,735.6V739.5M459.5,735.2V739.7M460.5,735.3V739.8M461.5,735.8V739.8M462.5,735.9V739.9M463.5,736.0V739.6M464.5,735.8V740.2M465.5,736.1V739.9M466.5,736.2V739.9M467.5,736.4V740.5M468.5,736.0V740.7M469.5,736.6V740.8M470.5,736.5V740.4M471.5,736.8V740.4M472.5,736.6V740.6M473.5,736.6V741.4M474.5,736.7V741.6M475.5,736.8V741.7M476.5,736.8V741.0M477.5,737.4V741.8M478.5,737.0V741.3M479.5,737.4V741.2M480.5,737.1V741.4M481.5,737.2V742.3M482.5,737.3V742.2M483.5,737.8V741.9M484.5,737.5V742.0M485.5,738.0V742.4M486.5,738.0V742.1M487.5,737.9V742.5M488.5,737.9V742.3M489.5,738.6V743.1M490.5,738.5V742.4M491.5,738.3V742.6M492.5,738.9V742.5M493.5,739.0V743.4M494.5,738.9V743.0M495.5,739.3V743.0M496.5,739.1V743.3M497.5,739.1V743.8M498.5,739.6V743.2M499.5,739.3V744.0M500.5,739.3V743.8M501.5,739.7V743.7M502.5,739.2V744.1M503.5,739.2V743.3M504.5,739.8V743.7M505.5,739.8V744.2M506.5,739.8V743.8M507.5,739.7V743.7M508.5,740.0V743.7M509.5,740.1V743.9M510.5,739.4V743.7M511.5,739.8V743.9M512.5,739.8V743.7M513.5,739.8V743.7M514.5,740.2V743.8M515.5,740.0V743.9M516.5,739.6V744.6M517.5,740.2V743.9M518.5,740.2V744.7M519.5,740.1V744.7M520.5,740.4V743.9M521.5,740.4V744.4M522.5,740.5V744.7M523.5,740.2V744.6M524.5,740.6V744.5M525.5,739.9V744.8M526.5,740.3V744.2M527.5,740.0V744.7M528.5,740.3V744.7M529.5,740.5V745.0M530.5,740.3V744.9M531.5,740.4V744.6M532.5,740.6V744.8M533.5,740.8V744.7M534.5,740.5V744.6M535.5,740.9V744.5M536.5,740.9V745.4M537.5,740.8V745.2M538.5,740.9V745.3M539.5,740.8V745.1M540.5,740.9V745.4M541.5,740.5V744.8M542.5,741.2V745.4M543.5,741.2V744.7M544.5,740.9V745.6M545.5,740.8V745.0M546.5,740.5V744.8M547.5,740.0V744.7M548.5,739.8V743.7M549.5,739.7V743.9M550.5,739.0V744.0M551.5,739.1V743.2M552.5,738.7V742.7M553.5,738.5V742.8M554.5,738.1V742.5M555.5,737.9V742.2M556.5,737.7V742.2M557.5,737.2V741.5M558.5,737.1V741.6M559.5,736.5V741.3M560.5,736.6V740.5M561.5,735.9V740.7M562.5,735.9V739.6M563.5,735.5V739.5M564.5,735.3V739.3M565.5,734.8V739.1M566.5,734.9V739.2M567.5,734.7V738.3M568.5,734.4V738.8M569.5,733.8V738.3M570.5,734.7V739.1M571.5,736.0V739.8M572.5,737.4V742.0M573.5,740.2V743.8M574.5,743.7V748.6M575.5,745.5V749.4M576.5,744.3V748.3M577.5,742.9V746.9M578.5,741.3V745.9M579.5,741.2V745.5M580.5,740.1V744.8M581.5,740.1V744.3M582.5,739.4V743.3M583.5,738.4V742.9M584.5,737.9V742.3M585.5,737.8V741.8M586.5,737.7V741.9M587.5,737.5V741.9M588.5,737.2V741.5M589.5,737.1V741.7M590.5,737.4V741.7M591.5,737.4V741.8M592.5,737.2V740.8M593.5,736.7V741.4M594.5,736.5V740.5M595.5,736.7V740.7M596.5,736.3V740.4M597.5,736.2V740.7M598.5,735.8V740.8M599.5,736.1V740.6M600.5,735.9V740.1M601.5,736.0V740.2M602.5,735.4V739.4M603.5,735.6V740.1M604.5,735.4V740.0M605.5,735.4V739.8M606.5,735.0V739.6M607.5,735.3V739.3M608.5,734.9V739.2M609.5,735.0V738.6M610.5,734.5V738.7M611.5,734.6V739.0M612.5,734.8V738.7M613.5,734.3V739.1M614.5,734.7V738.3M615.5,734.6V738.9M616.5,734.8V738.9M617.5,734.3V739.1M618.5,734.2V738.9M619.5,734.9V738.4M620.5,734.9V738.9M621.5,734.4V738.9M622.5,735.1V739.3M623.5,734.6V739.3M624.5,734.6V739.4M625.5,735.1V739.4M626.5,735.0V738.7M627.5,735.1V739.0M628.5,734.9V738.7M629.5,734.7V739.1M630.5,734.5V739.6M631.5,735.2V739.1M632.5,735.0V738.8M633.5,734.8V739.5M634.5,734.9V739.6M635.5,734.7V739.6M636.5,735.0V739.5M637.5,734.9V739.4M638.5,735.3V739.2M639.5,734.9V739.2M640.5,734.9V739.4M641.5,735.3V739.8M642.5,735.5V739.6M643.5,734.9V739.8M644.5,735.3V739.9M645.5,735.2V740.0M646.5,735.5V740.2M647.5,735.5V740.1M648.5,735.4V740.1M649.5,735.1V739.7M650.5,735.4V740.3M651.5,735.7V740.1M652.5,735.6V739.4M653.5,735.7V739.4M654.5,735.9V739.7M655.5,736.0V740.1M656.5,735.3V740.3M657.5,735.4V740.2M658.5,735.7V740.0M659.5,736.0V739.8M660.5,736.1V740.2M661.5,736.0V739.7M662.5,735.5V739.9M663.5,735.8V740.1M664.5,735.6V740.0M665.5,736.2V740.5M666.5,735.7V740.1M667.5,736.2V739.9M668.5,736.0V740.4M669.5,735.9V740.1M670.5,735.7V740.0M671.5,735.6V739.9M672.5,736.0V739.9M673.5,735.8V739.8M674.5,735.6V739.6M675.5,735.4V739.4M676.5,735.4V739.4M677.5,735.7V739.6M678.5,735.7V739.7M679.5,735.3V739.8M680.5,735.4V739.7M681.5,735.5V739.3M682.5,735.0V740.0M683.5,735.1V739.5M684.5,735.0V740.1M685.5,735.0V740.1M686.5,735.1V739.8M687.5,735.4V739.2M688.5,734.9V739.4M689.5,735.1V739.4M690.5,735.2V739.3M691.5,735.4V739.3M692.5,734.8V739.6M693.5,734.9V739.2M694.5,735.0V739.0M695.5,735.4V739.3M696.5,735.0V738.8M697.5,734.6V739.6M698.5,735.0V738.8M699.5,735.2V739.7M700.5,735.1V738.8M701.5,734.8V739.6M702.5,735.0V739.0M703.5,734.9V739.0M704.5,734.4V739.4M705.5,734.8V738.8M706.5,734.5V739.4M707.5,734.8V739.0M708.5,735.0V738.7M709.5,734.9V738.5M710.5,734.7V739.3M711.5,734.3V739.1M712.5,734.7V738.7M713.5,734.4V739.2M714.5,734.6V738.4M715.5,734.7V739.1M716.5,734.7V738.4M717.5,734.3V738.4M718.5,734.6V738.9M719.5,734.2V738.7M720.5,734.2V738.3M721.5,734.4V738.3M722.5,734.2V738.8M723.5,734.1V738.6M724.5,733.8V739.0M725.5,734.1V738.5M726.5,734.3V738.2M727.5,734.0V738.5M728.5,734.1V738.4M729.5,734.3V738.7M730.5,734.2V738.3M731.5,733.8V738.0M732.5,734.1V738.4M733.5,734.2V737.9M734.5,733.5V738.5M735.5,733.6V737.7M736.5,733.4V738.0M737.5,733.4V738.5M738.5,733.7V737.6M739.5,733.6V737.8M740.5,733.8V738.1M741.5,733.5V738.4M742.5,733.5V738.1M743.5,733.5V738.0M744.5,733.2V737.8M745.5,733.3V737.5M746.5,733.5V737.8M747.5,733.7V737.5M748.5,733.7V737.4M749.5,733.5V737.7M750.5,733.8V737.9M751.5,733.4V738.0M752.5,733.3V738.2M753.5,733.7V737.6M754.5,733.8V738.3M755.5,733.7V738.2M756.5,733.7V738.6M757.5,733.9V738.4M758.5,734.4V738.8M759.5,734.1V737.9M760.5,733.8V738.2M761.5,734.0V738.2M762.5,734.2V739.0M763.5,734.5V738.4M764.5,734.8V738.3M765.5,734.6V739.1M766.5,734.7V738.6M767.5,734.5V738.9M768.5,734.6V738.5M769.5,734.5V738.7M770.5,735.1V739.6M771.5,735.0V738.9M772.5,734.9V739.2M773.5,734.7V739.6M774.5,734.9V738.9M775.5,735.2V739.9M776.5,735.5V740.0M777.5,735.5V739.2M778.5,735.4V739.6M779.5,735.1V739.7M780.5,735.3V739.6M781.5,735.9V739.6M782.5,735.6V740.0M783.5,735.6V740.1M784.5,736.1V739.6M785.5,736.0V739.7M786.5,736.1V740.0M787.5,736.0V740.0M788.5,736.1V740.0M789.5,736.1V741.0M790.5,736.1V740.5M791.5,736.7V740.5M792.5,736.3V740.4M793.5,736.8V740.8M794.5,736.6V741.2M795.5,736.6V741.2M796.5,736.3V741.3M797.5,736.4V740.8M798.5,736.9V741.5M799.5,736.5V741.4M800.5,736.8V741.1M801.5,736.9V741.5M802.5,736.8V741.6M803.5,737.1V741.4M804.5,736.8V741.1M805.5,736.9V741.8M806.5,737.5V741.7M807.5,737.2V741.5M808.5,737.0V741.1M809.5,737.3V741.4M810.5,737.3V741.4M811.5,737.6V741.4M812.5,737.5V741.4M813.5,737.0V742.0M814.5,737.5V741.3M815.5,737.1V741.4M816.5,737.7V742.1M817.5,738.0V741.7M818.5,737.5V742.0M819.5,737.7V741.9M820.5,738.1V742.1M821.5,738.3V742.8M822.5,738.3V743.0M823.5,738.3V742.9M824.5,738.6V743.4M825.5,739.1V743.7M826.5,738.9V743.5M827.5,738.8V743.6M828.5,739.6V743.9M829.5,739.3V744.0M830.5,739.8V743.7M831.5,739.6V744.0M832.5,739.7V743.9M833.5,740.3V743.9M834.5,740.0V744.0M835.5,740.6V744.9M836.5,740.5V745.0M837.5,740.9V745.3M838.5,740.5V745.0M839.5,740.8V744.7M840.5,740.7V745.1M841.5,740.7V745.5M842.5,741.1V745.0M843.5,741.3V745.5M844.5,741.3V744.9M845.5,740.9V745.6M846.5,741.4V745.8M847.5,741.2V745.4M848.5,741.3V745.7M849.5,741.3V745.7M850.5,741.3V745.6M851.5,741.3V745.7M852.5,741.1V745.9M853.5,741.6V745.8M854.5,741.4V745.9M855.5,741.3V745.6M856.5,741.4V746.3M857.5,742.2V746.2M858.5,741.9V745.8M859.5,741.6V746.1M860.5,742.0V745.8M861.5,742.2V746.5M862.5,742.0V746.5M863.5,741.5V745.9M864.5,741.8V746.5M865.5,741.3V746.3M866.5,741.8V746.1M867.5,741.5V745.5M868.5,741.1V745.9M869.5,741.7V745.9M870.5,741.2V746.0M871.5,741.3V745.6M872.5,741.4V745.7M873.5,741.0V745.6M874.5,741.1V745.8M875.5,741.1V745.8M876.5,741.0V745.1M877.5,741.4V745.1M878.5,741.3V744.9M879.5,741.1V744.9M880.5,740.8V745.3M881.5,741.1V745.6M882.5,741.1V745.2M883.5,741.1V745.4M884.5,740.7V744.5M885.5,740.7V745.3M886.5,740.2V744.6M887.5,740.8V744.6M888.5,740.6V745.1M889.5,740.3V744.4M890.5,740.6V744.4M891.5,740.6V744.8M892.5,740.4V744.3M893.5,740.5V744.5M894.5,740.5V744.7M895.5,740.5V744.4M896.5,739.7V744.5M897.5,739.8V744.1M898.5,740.2V744.6M899.5,739.8V743.9M900.5,739.5V743.7M901.5,740.0V743.7M902.5,739.6V744.3M903.5,739.9V744.0M904.5,740.0V743.8M905.5,739.5V743.8M906.5,739.9V744.1M907.5,739.5V744.2M908.5,739.5V743.5M909.5,739.1V743.6M910.5,739.5V744.2M911.5,739.0V743.9M912.5,738.9V743.2M913.5,739.1V743.2M914.5,739.1V743.9M915.5,738.9V743.2M916.5,739.2V743.3M917.5,739.1V743.6M918.5,739.3V743.0M919.5,738.7V743.0M920.5,738.9V743.0M921.5,738.2V742.9M922.5,738.4V742.6M923.5,738.1V741.9M924.5,737.5V742.5M925.5,737.6V741.9M926.5,737.5V741.6M927.5,737.3V741.3M928.5,737.8V742.0M929.5,738.3V745.8M930.5,740.4V747.6M931.5,743.6V751.1M932.5,748.9V756.4M933.5,754.1V761.6M934.5,754.3V761.5M935.5,750.4V757.4M936.5,746.0V753.2M937.5,742.9V750.2M938.5,740.2V748.2M939.5,737.6V744.9M940.5,735.9V743.6M941.5,736.8V740.8M942.5,735.9V739.5M943.5,734.4V739.2M944.5,733.6V737.9M945.5,733.1V737.5M946.5,733.8V737.9M947.5,733.6V737.9M948.5,734.3V737.9M949.5,734.2V738.4M950.5,734.1V738.9M951.5,734.5V738.8M952.5,734.7V738.8M953.5,734.4V739.4M954.5,734.8V739.5" stroke="#e818e8" stroke-width="1.05" fill="none"/><path d="M224.5,743.4V748.3622641281142M225.5,742.8V745.7739397352267M235.5,741.9V745.8570655459043M250.5,741.4V748.3912430978612M251.5,740.8V743.7979323209595M264.5,740.6V748.635951378272M266.5,739.9V743.9184787602732M300.5,738.2V746.2267330408738M301.5,738.1V744.1321974782784M307.5,738.6V742.6073182822429M319.5,739.4V743.3970546970702M320.5,739.5V746.5294828855737M332.5,739.8V746.7564585483449M335.5,739.8V742.7886351247619M341.5,738.7V745.717111752099M350.5,739.0V740.989381787236M352.5,739.2V745.1990148366169M353.5,738.9V741.9178638005814M362.5,738.0V739.9876786086907M363.5,738.0V742.9666932322822M378.5,737.7V744.6757457539248M385.5,737.9V742.9174793392826M386.5,737.3V742.3291779036072M391.5,737.7V740.7336562249873M397.5,737.1V745.0831461150545M404.5,737.5V741.4692620050616M415.5,737.0V743.0303720456232M422.5,737.2V740.1914234399499M423.5,737.1V739.1194572842531M435.5,737.5V743.5347686779153M443.5,738.1V746.111395274682M446.5,738.8V746.7910674872578M457.5,739.8V742.7888399999999M462.5,739.9V743.8682741886433M463.5,739.6V745.5804788511185M467.5,740.5V743.4693331685455M475.5,741.7V743.7150959362867M480.5,741.4V746.3827447346131M481.5,742.3V750.2950289438846M482.5,742.2V750.1623505346174M487.5,742.5V747.4692438247233M493.5,743.4V749.3606243388087M496.5,743.3V747.3218891420902M505.5,744.2V748.217540964773M510.5,743.7V751.7465296093238M520.5,743.9V748.9008565739692M524.5,744.5V749.5172151131322M530.5,744.9V747.8613303168272M544.5,745.6V751.5546520361027M570.5,739.1V747.1325123026521M571.5,739.8V746.7959258922334M573.5,743.8V745.768906196804M578.5,745.9V753.8804076961768M579.5,745.5V752.457905100884M585.5,741.8V748.7728111697198M595.5,740.7V747.6562692232261M596.5,740.4V746.3733237542026M607.5,739.3V747.3291555518574M618.5,738.9V743.8892867729803M627.5,739.0V741.9876221443249M628.5,738.7V741.6806322344064M640.5,739.4V745.358898565765M650.5,740.3V745.2598101465154M651.5,740.1V746.127178605636M657.5,740.2V745.1651997566638M662.5,739.9V743.919708445197M664.5,740.0V744.041769569117M675.5,739.4V747.4414198530299M682.5,740.0V745.0494694205001M690.5,739.3V747.2577968995988M692.5,739.6V741.5821167366047M700.5,738.8V745.7503169053373M705.5,738.8V745.7672401244265M714.5,738.4V744.4145423144527M724.5,739.0V740.9566035073907M729.5,738.7V743.7439468515093M737.5,738.5V743.5137721906409M743.5,738.0V746.0154339613035M750.5,737.9V744.9102919565635M752.5,738.2V743.2034191694968M753.5,737.6V739.6286750205315M767.5,738.9V744.9037048716323M772.5,739.2V747.1580270543925M788.5,740.0V745.9636252211502M790.5,740.5V743.5031202168502M799.5,741.4V745.391962411732M824.5,743.4V749.4201396535898M832.5,743.9V745.9120946823425M835.5,744.9V750.9478511615223M851.5,745.7V748.6618660014335M859.5,746.1V750.0865324094185M869.5,745.9V747.8552541136423M871.5,745.6V753.5771425631616M874.5,745.8V747.7979098318798M884.5,744.5V751.4899207131664M893.5,744.5V750.463670649892M912.5,743.2V747.1531455352397M943.5,739.2V746.2007847320964M947.5,737.9V745.8929591375801M234.5,740.1V752M292.5,736.1V746M315.5,736.9V745M340.5,737.1V744M360.5,736.2V745M372.5,735.8V744M395.5,735.1V744M420.5,735.0V741M437.5,735.6V746M455.5,737.1V744M480.5,739.5V745M495.5,741.0V747M515.5,742.0V748M532.5,742.6V749M558.5,739.1V747M572.5,738.7V752M576.5,746.7V755M640.5,737.3V744M665.5,738.0V746M672.5,737.8V747M690.5,737.3V746M705.5,736.9V747M730.5,736.1V744M760.5,736.2V744M790.5,738.3V745M830.5,741.6V747M845.5,743.2V748M870.5,743.5V749M900.5,742.0V750M925.5,739.8V750" stroke="#c030c0" stroke-width="1" fill="none"/><g stroke="#111" stroke-width="1.6"><line x1="44" y1="132.5" x2="1054" y2="132.5"/><line x1="44" y1="800.8" x2="1054" y2="800.8"/><line x1="51.2" y1="132" x2="51.2" y2="810"/><line x1="1053.4" y1="132" x2="1053.4" y2="810"/><line x1="44" y1="801.0" x2="59" y2="801.0"/><line x1="1045" y1="801.0" x2="1053" y2="801.0"/><line x1="47" y1="786.1" x2="55" y2="786.1"/><line x1="1049" y1="786.1" x2="1053" y2="786.1"/><line x1="47" y1="771.3" x2="55" y2="771.3"/><line x1="1049" y1="771.3" x2="1053" y2="771.3"/><line x1="47" y1="756.4" x2="55" y2="756.4"/><line x1="1049" y1="756.4" x2="1053" y2="756.4"/><line x1="47" y1="741.5" x2="55" y2="741.5"/><line x1="1049" y1="741.5" x2="1053" y2="741.5"/><line x1="44" y1="726.7" x2="59" y2="726.7"/><line x1="1045" y1="726.7" x2="1053" y2="726.7"/><line x1="47" y1="711.8" x2="55" y2="711.8"/><line x1="1049" y1="711.8" x2="1053" y2="711.8"/><line x1="47" y1="696.9" x2="55" y2="696.9"/><line x1="1049" y1="696.9" x2="1053" y2="696.9"/><line x1="47" y1="682.1" x2="55" y2="682.1"/><line x1="1049" y1="682.1" x2="1053" y2="682.1"/><line x1="47" y1="667.2" x2="55" y2="667.2"/><line x1="1049" y1="667.2" x2="1053" y2="667.2"/><line x1="44" y1="652.3" x2="59" y2="652.3"/><line x1="1045" y1="652.3" x2="1053" y2="652.3"/><line x1="47" y1="637.5" x2="55" y2="637.5"/><line x1="1049" y1="637.5" x2="1053" y2="637.5"/><line x1="47" y1="622.6" x2="55" y2="622.6"/><line x1="1049" y1="622.6" x2="1053" y2="622.6"/><line x1="47" y1="607.7" x2="55" y2="607.7"/><line x1="1049" y1="607.7" x2="1053" y2="607.7"/><line x1="47" y1="592.9" x2="55" y2="592.9"/><line x1="1049" y1="592.9" x2="1053" y2="592.9"/><line x1="44" y1="578.0" x2="59" y2="578.0"/><line x1="1045" y1="578.0" x2="1053" y2="578.0"/><line x1="47" y1="563.1" x2="55" y2="563.1"/><line x1="1049" y1="563.1" x2="1053" y2="563.1"/><line x1="47" y1="548.3" x2="55" y2="548.3"/><line x1="1049" y1="548.3" x2="1053" y2="548.3"/><line x1="47" y1="533.4" x2="55" y2="533.4"/><line x1="1049" y1="533.4" x2="1053" y2="533.4"/><line x1="47" y1="518.5" x2="55" y2="518.5"/><line x1="1049" y1="518.5" x2="1053" y2="518.5"/><line x1="44" y1="503.7" x2="59" y2="503.7"/><line x1="1045" y1="503.7" x2="1053" y2="503.7"/><line x1="47" y1="488.8" x2="55" y2="488.8"/><line x1="1049" y1="488.8" x2="1053" y2="488.8"/><line x1="47" y1="473.9" x2="55" y2="473.9"/><line x1="1049" y1="473.9" x2="1053" y2="473.9"/><line x1="47" y1="459.1" x2="55" y2="459.1"/><line x1="1049" y1="459.1" x2="1053" y2="459.1"/><line x1="47" y1="444.2" x2="55" y2="444.2"/><line x1="1049" y1="444.2" x2="1053" y2="444.2"/><line x1="44" y1="429.3" x2="59" y2="429.3"/><line x1="1045" y1="429.3" x2="1053" y2="429.3"/><line x1="47" y1="414.5" x2="55" y2="414.5"/><line x1="1049" y1="414.5" x2="1053" y2="414.5"/><line x1="47" y1="399.6" x2="55" y2="399.6"/><line x1="1049" y1="399.6" x2="1053" y2="399.6"/><line x1="47" y1="384.7" x2="55" y2="384.7"/><line x1="1049" y1="384.7" x2="1053" y2="384.7"/><line x1="47" y1="369.9" x2="55" y2="369.9"/><line x1="1049" y1="369.9" x2="1053" y2="369.9"/><line x1="44" y1="355.0" x2="59" y2="355.0"/><line x1="1045" y1="355.0" x2="1053" y2="355.0"/><line x1="47" y1="340.1" x2="55" y2="340.1"/><line x1="1049" y1="340.1" x2="1053" y2="340.1"/><line x1="47" y1="325.3" x2="55" y2="325.3"/><line x1="1049" y1="325.3" x2="1053" y2="325.3"/><line x1="47" y1="310.4" x2="55" y2="310.4"/><line x1="1049" y1="310.4" x2="1053" y2="310.4"/><line x1="47" y1="295.5" x2="55" y2="295.5"/><line x1="1049" y1="295.5" x2="1053" y2="295.5"/><line x1="44" y1="280.7" x2="59" y2="280.7"/><line x1="1045" y1="280.7" x2="1053" y2="280.7"/><line x1="47" y1="265.8" x2="55" y2="265.8"/><line x1="1049" y1="265.8" x2="1053" y2="265.8"/><line x1="47" y1="250.9" x2="55" y2="250.9"/><line x1="1049" y1="250.9" x2="1053" y2="250.9"/><line x1="47" y1="236.1" x2="55" y2="236.1"/><line x1="1049" y1="236.1" x2="1053" y2="236.1"/><line x1="47" y1="221.2" x2="55" y2="221.2"/><line x1="1049" y1="221.2" x2="1053" y2="221.2"/><line x1="44" y1="206.3" x2="59" y2="206.3"/><line x1="1045" y1="206.3" x2="1053" y2="206.3"/><line x1="47" y1="191.5" x2="55" y2="191.5"/><line x1="1049" y1="191.5" x2="1053" y2="191.5"/><line x1="47" y1="176.6" x2="55" y2="176.6"/><line x1="1049" y1="176.6" x2="1053" y2="176.6"/><line x1="47" y1="161.7" x2="55" y2="161.7"/><line x1="1049" y1="161.7" x2="1053" y2="161.7"/><line x1="47" y1="146.9" x2="55" y2="146.9"/><line x1="1049" y1="146.9" x2="1053" y2="146.9"/><line x1="44" y1="132.0" x2="59" y2="132.0"/><line x1="1045" y1="132.0" x2="1053" y2="132.0"/><line x1="51.2" y1="792" x2="51.2" y2="810"/><line x1="51.2" y1="132" x2="51.2" y2="141"/><line x1="91.3" y1="796" x2="91.3" y2="806"/><line x1="91.3" y1="132" x2="91.3" y2="137"/><line x1="131.4" y1="796" x2="131.4" y2="806"/><line x1="131.4" y1="132" x2="131.4" y2="137"/><line x1="171.5" y1="796" x2="171.5" y2="806"/><line x1="171.5" y1="132" x2="171.5" y2="137"/><line x1="211.6" y1="796" x2="211.6" y2="806"/><line x1="211.6" y1="132" x2="211.6" y2="137"/><line x1="251.7" y1="792" x2="251.7" y2="810"/><line x1="251.7" y1="132" x2="251.7" y2="141"/><line x1="291.7" y1="796" x2="291.7" y2="806"/><line x1="291.7" y1="132" x2="291.7" y2="137"/><line x1="331.8" y1="796" x2="331.8" y2="806"/><line x1="331.8" y1="132" x2="331.8" y2="137"/><line x1="371.9" y1="796" x2="371.9" y2="806"/><line x1="371.9" y1="132" x2="371.9" y2="137"/><line x1="412.0" y1="796" x2="412.0" y2="806"/><line x1="412.0" y1="132" x2="412.0" y2="137"/><line x1="452.1" y1="792" x2="452.1" y2="810"/><line x1="452.1" y1="132" x2="452.1" y2="141"/><line x1="492.2" y1="796" x2="492.2" y2="806"/><line x1="492.2" y1="132" x2="492.2" y2="137"/><line x1="532.3" y1="796" x2="532.3" y2="806"/><line x1="532.3" y1="132" x2="532.3" y2="137"/><line x1="572.4" y1="796" x2="572.4" y2="806"/><line x1="572.4" y1="132" x2="572.4" y2="137"/><line x1="612.5" y1="796" x2="612.5" y2="806"/><line x1="612.5" y1="132" x2="612.5" y2="137"/><line x1="652.6" y1="792" x2="652.6" y2="810"/><line x1="652.6" y1="132" x2="652.6" y2="141"/><line x1="692.6" y1="796" x2="692.6" y2="806"/><line x1="692.6" y1="132" x2="692.6" y2="137"/><line x1="732.7" y1="796" x2="732.7" y2="806"/><line x1="732.7" y1="132" x2="732.7" y2="137"/><line x1="772.8" y1="796" x2="772.8" y2="806"/><line x1="772.8" y1="132" x2="772.8" y2="137"/><line x1="812.9" y1="796" x2="812.9" y2="806"/><line x1="812.9" y1="132" x2="812.9" y2="137"/><line x1="853.0" y1="792" x2="853.0" y2="810"/><line x1="853.0" y1="132" x2="853.0" y2="141"/><line x1="893.1" y1="796" x2="893.1" y2="806"/><line x1="893.1" y1="132" x2="893.1" y2="137"/><line x1="933.2" y1="796" x2="933.2" y2="806"/><line x1="933.2" y1="132" x2="933.2" y2="137"/><line x1="973.3" y1="796" x2="973.3" y2="806"/><line x1="973.3" y1="132" x2="973.3" y2="137"/><line x1="1013.4" y1="796" x2="1013.4" y2="806"/><line x1="1013.4" y1="132" x2="1013.4" y2="137"/><line x1="1053.5" y1="792" x2="1053.5" y2="810"/><line x1="1053.5" y1="132" x2="1053.5" y2="141"/></g><line x1="221" y1="800.8" x2="954" y2="800.8" stroke="#5a1410" stroke-width="2.2"/><g fill="none" stroke="#c0141c" stroke-width="3"><rect x="545" y="456" width="68" height="315.5"/><rect x="909.5" y="452.5" width="63" height="319.5"/><line x1="580" y1="455" x2="619" y2="418"/><line x1="906" y1="411" x2="932" y2="452"/></g><rect x="679" y="442" width="5" height="3" fill="#c0141c"/><line x1="54" y1="112" x2="84" y2="112" stroke="#b84a4a" stroke-width="2"/><line x1="141" y1="112" x2="170" y2="112" stroke="#e040e0" stroke-width="2"/><line x1="226.6" y1="112" x2="256" y2="112" stroke="#3030c0" stroke-width="2"/><line x1="312.4" y1="112" x2="341.5" y2="112" stroke="#40c040" stroke-width="2"/><text transform="translate(16.7,801.0) rotate(90) scale(1.327,1)" text-anchor="middle" font-family="Liberation Sans" font-size="23" fill="#000" stroke="#000" stroke-width="0.35">0</text><g transform="translate(16.7,726.7) rotate(90) scale(1.187,1)"><text x="6.4" text-anchor="middle" font-family="Liberation Sans" font-size="23" fill="#000" stroke="#000" stroke-width="0.35">0</text><path d="M-4.2,-16.4 L-6.5,-16.4 Q-7.6,-13.8 -10.6,-12.3 L-10.6,-10.2 Q-8.3,-11.2 -6.5,-12.8 L-6.5,0 L-4.2,0 Z" fill="#000"/></g><text transform="translate(16.7,652.3) rotate(90) scale(1.165,1)" text-anchor="middle" font-family="Liberation Sans" font-size="23" fill="#000" stroke="#000" stroke-width="0.35">20</text><text transform="translate(16.7,578.0) rotate(90) scale(1.155,1)" text-anchor="middle" font-family="Liberation Sans" font-size="23" fill="#000" stroke="#000" stroke-width="0.35">30</text><text transform="translate(16.7,503.7) rotate(90) scale(1.136,1)" text-anchor="middle" font-family="Liberation Sans" font-size="23" fill="#000" stroke="#000" stroke-width="0.35">40</text><text transform="translate(16.7,429.3) rotate(90) scale(1.155,1)" text-anchor="middle" font-family="Liberation Sans" font-size="23" fill="#000" stroke="#000" stroke-width="0.35">50</text><text transform="translate(16.7,355.0) rotate(90) scale(1.170,1)" text-anchor="middle" font-family="Liberation Sans" font-size="23" fill="#000" stroke="#000" stroke-width="0.35">60</text><text transform="translate(16.7,280.7) rotate(90) scale(1.170,1)" text-anchor="middle" font-family="Liberation Sans" font-size="23" fill="#000" stroke="#000" stroke-width="0.35">70</text><text transform="translate(16.7,206.3) rotate(90) scale(1.160,1)" text-anchor="middle" font-family="Liberation Sans" font-size="23" fill="#000" stroke="#000" stroke-width="0.35">80</text><text transform="translate(16.7,132.0) rotate(90) scale(1.178,1)" text-anchor="middle" font-family="Liberation Sans" font-size="23" fill="#000" stroke="#000" stroke-width="0.35">90</text></svg><div class="a" style="left:622.11px;top:396px;font-size:19.91px;line-height:19.91px;font-weight:bold;color:#c0141c;transform:scaleX(0.9702);transform-origin:0 0;">first and second storm in a row</div><div class="a" style="left:91.59px;top:104px;font-size:14.83px;line-height:14.83px;color:#111;transform:scaleX(0.8386);transform-origin:0 0;">BER</div><div class="a" style="left:178.23px;top:104px;font-size:14.83px;line-height:14.83px;color:#111;transform:scaleX(0.8094);transform-origin:0 0;">SNR</div><div class="a" style="left:264.44px;top:104px;font-size:14.83px;line-height:14.83px;color:#111;transform:scaleX(0.7930);transform-origin:0 0;">Quality</div><div class="a" style="left:349.49px;top:104px;font-size:14.83px;line-height:14.83px;color:#111;transform:scaleX(0.8434);transform-origin:0 0;">Level</div><div class="a" style="left:1064.5px;top:80px;width:130.5px;height:713.5px;border:1px solid #dadada;border-radius:2px;background:#fafafa"></div><div class="a" style="left:1069px;top:74px;width:66px;height:12px;background:#fafafa"></div><div class="a" style="left:1070.74px;top:75px;font-size:9.88px;line-height:9.88px;color:#20207a;transform:scaleX(0.7984);transform-origin:0 0;-webkit-text-stroke:0.25px #20207a;">Transponder [BS]</div><div class="a" style="left:1070.17px;top:103px;font-size:10.17px;line-height:10.17px;color:#2a2a2a;transform:scaleX(0.7911);transform-origin:0 0;-webkit-text-stroke:0.2px #2a2a2a;">Frequency:</div><div class="a" style="left:1127.03px;top:103px;font-size:10.17px;line-height:10.17px;font-weight:bold;color:#177317;transform:scaleX(0.7789);transform-origin:0 0;">10759,858 MHz</div><div class="a" style="left:1070.13px;top:141px;font-size:10.17px;line-height:10.17px;color:#2a2a2a;transform:scaleX(0.8327);transform-origin:0 0;-webkit-text-stroke:0.2px #2a2a2a;">Polarization:</div><div class="a" style="left:1127.43px;top:141px;font-size:10.17px;line-height:10.17px;font-weight:bold;color:#177317;transform:scaleX(0.7324);transform-origin:0 0;">Vertical</div><div class="a" style="left:1070.41px;top:178px;font-size:10.17px;line-height:10.17px;color:#2a2a2a;transform:scaleX(0.7793);transform-origin:0 0;-webkit-text-stroke:0.2px #2a2a2a;">Symbol Rate:</div><div class="a" style="left:1127.27px;top:178px;font-size:10.17px;line-height:10.17px;font-weight:bold;color:#177317;transform:scaleX(0.7524);transform-origin:0 0;">27500,018 KS/s</div><div class="a" style="left:1070.39px;top:215px;font-size:10.17px;line-height:10.17px;color:#2a2a2a;transform:scaleX(0.8294);transform-origin:0 0;-webkit-text-stroke:0.2px #2a2a2a;">Standard:</div><div class="a" style="left:1126.98px;top:215px;font-size:10.17px;line-height:10.17px;font-weight:bold;color:#177317;transform:scaleX(0.7418);transform-origin:0 0;">DVB-S</div><div class="a" style="left:1070.09px;top:253px;font-size:10.17px;line-height:10.17px;color:#2a2a2a;transform:scaleX(0.8882);transform-origin:0 0;-webkit-text-stroke:0.2px #2a2a2a;">Modulation:</div><div class="a" style="left:1127.22px;top:253px;font-size:10.17px;line-height:10.17px;font-weight:bold;color:#177317;transform:scaleX(0.6996);transform-origin:0 0;">QPSK</div><div class="a" style="left:1070.23px;top:290px;font-size:10.17px;line-height:10.17px;color:#2a2a2a;transform:scaleX(0.7116);transform-origin:0 0;-webkit-text-stroke:0.2px #2a2a2a;">FEC:</div><div class="a" style="left:1127.33px;top:290px;font-size:10.17px;line-height:10.17px;font-weight:bold;color:#177317;transform:scaleX(0.8633);transform-origin:0 0;">3/4</div><div class="a" style="left:1070.09px;top:327px;font-size:10.17px;line-height:10.17px;color:#2a2a2a;transform:scaleX(0.8910);transform-origin:0 0;-webkit-text-stroke:0.2px #2a2a2a;">RollOff:</div><div class="a" style="left:1127.18px;top:327px;font-size:10.17px;line-height:10.17px;font-weight:bold;color:#177317;transform:scaleX(0.8021);transform-origin:0 0;">0.35</div><div class="a" style="left:1070.09px;top:365px;font-size:10.17px;line-height:10.17px;color:#2a2a2a;transform:scaleX(0.8900);transform-origin:0 0;-webkit-text-stroke:0.2px #2a2a2a;">Pilot:</div><div class="a" style="left:1127.25px;top:365px;font-size:10.17px;line-height:10.17px;font-weight:bold;color:#177317;transform:scaleX(0.8311);transform-origin:0 0;">Auto</div><div class="a" style="left:1070.39px;top:402px;font-size:10.17px;line-height:10.17px;color:#2a2a2a;transform:scaleX(0.8115);transform-origin:0 0;-webkit-text-stroke:0.2px #2a2a2a;">Spectrum:</div><div class="a" style="left:1126.95px;top:402px;font-size:10.17px;line-height:10.17px;font-weight:bold;color:#177317;transform:scaleX(0.7917);transform-origin:0 0;">Inverted</div><div class="a" style="left:1070.19px;top:439px;font-size:10.17px;line-height:10.17px;color:#2a2a2a;transform:scaleX(0.7595);transform-origin:0 0;-webkit-text-stroke:0.2px #2a2a2a;">Frame Type:</div><div class="a" style="left:1126.96px;top:439px;font-size:10.17px;line-height:10.17px;font-weight:bold;color:#177317;transform:scaleX(0.7749);transform-origin:0 0;">Long Frame</div><div class="a" style="left:1070.39px;top:477px;font-size:10.17px;line-height:10.17px;color:#2a2a2a;transform:scaleX(0.8244);transform-origin:0 0;-webkit-text-stroke:0.2px #2a2a2a;">Code Mode:</div><div class="a" style="left:1127.18px;top:477px;font-size:10.17px;line-height:10.17px;font-weight:bold;color:#177317;transform:scaleX(0.8009);transform-origin:0 0;">CCM</div><div class="a" style="left:1070.40px;top:514px;font-size:10.17px;line-height:10.17px;color:#2a2a2a;transform:scaleX(0.7908);transform-origin:0 0;-webkit-text-stroke:0.2px #2a2a2a;">Stream type:</div><div class="a" style="left:1127.42px;top:514px;font-size:10.17px;line-height:10.17px;font-weight:bold;color:#177317;transform:scaleX(0.7564);transform-origin:0 0;">Transport</div><div class="a" style="left:1070.20px;top:551px;font-size:10.17px;line-height:10.17px;color:#2a2a2a;transform:scaleX(0.6612);transform-origin:0 0;-webkit-text-stroke:0.2px #2a2a2a;">ISSYI</div><div class="a" style="left:1127.21px;top:551px;font-size:10.17px;line-height:10.17px;font-weight:bold;color:#177317;transform:scaleX(0.7310);transform-origin:0 0;">OFF</div><div class="a" style="left:1070.18px;top:589px;font-size:10.17px;line-height:10.17px;color:#2a2a2a;transform:scaleX(0.7788);transform-origin:0 0;-webkit-text-stroke:0.2px #2a2a2a;">NPD:</div><div class="a" style="left:1127.21px;top:589px;font-size:10.17px;line-height:10.17px;font-weight:bold;color:#177317;transform:scaleX(0.7310);transform-origin:0 0;">OFF</div><div class="a" style="left:1070.20px;top:626px;font-size:10.17px;line-height:10.17px;color:#2a2a2a;transform:scaleX(0.7542);transform-origin:0 0;-webkit-text-stroke:0.2px #2a2a2a;">RF Level:</div><div class="a" style="left:1127.18px;top:626px;font-size:10.17px;line-height:10.17px;font-weight:bold;color:#177317;transform:scaleX(0.7908);transform-origin:0 0;">-52 dBm</div><div class="a" style="left:1070.14px;top:663px;font-size:10.17px;line-height:10.17px;color:#2a2a2a;transform:scaleX(0.8266);transform-origin:0 0;-webkit-text-stroke:0.2px #2a2a2a;">BitRate:</div><div class="a" style="left:1127.34px;top:663px;font-size:10.17px;line-height:10.17px;font-weight:bold;color:#177317;transform:scaleX(0.8108);transform-origin:0 0;">38,015 Mbit/s</div><div class="a" style="left:1070.38px;top:701px;font-size:10.17px;line-height:10.17px;color:#2a2a2a;transform:scaleX(0.8413);transform-origin:0 0;-webkit-text-stroke:0.2px #2a2a2a;">CarrierWidth:</div><div class="a" style="left:1127.34px;top:701px;font-size:10.17px;line-height:10.17px;font-weight:bold;color:#177317;transform:scaleX(0.7849);transform-origin:0 0;">37,125 MHz</div><div class="a" style="left:1070.14px;top:752px;font-size:9.59px;line-height:9.59px;color:#3a3a3a;transform:scaleX(0.8308);transform-origin:0 0;">MIS (0):</div><div class="a" style="left:1127.5px;top:747px;width:53px;height:18.5px;border:1px solid #ececec;background:#fdfdfd"></div><div class="a" style="left:1130.36px;top:752px;font-size:9.59px;line-height:9.59px;color:#555;transform:scaleX(0.8527);transform-origin:0 0;">Single</div><svg class="a" style="left:1171px;top:753px" width="7" height="5"><path d="M0.5 0.5 L3.5 3.5 L6.5 0.5" fill="none" stroke="#aaa" stroke-width="1"/></svg><div class="a" style="left:1065.5px;top:802px;width:128px;height:22px;border:1px solid #d4d4d4;border-radius:3px;background:#fff"></div><div class="a" style="left:1124px;top:806px;width:11px;height:13px;border:1px solid #888;background:#fff"></div><div class="a" style="left:1125px;top:809px;width:9px;height:3px;background:#2f6fc8"></div><div class="a" style="left:1125px;top:814px;width:9px;height:1px;background:#c8a070"></div><div class="a" style="left:4.5px;top:833px;width:90px;height:18px;border:1px solid #b4b4b4;border-radius:2px;overflow:hidden;background:linear-gradient(#f2f2f2 0%,#ececec 42%,#d2d2d2 52%,#dcdcdc 100%)"><div style="position:absolute;left:0px;width:90px;top:0;height:100%;background:linear-gradient(#e2fae2 0%,#e2fae2 40%,#5cd65c 52%,#5cd65c 100%)"></div></div><div class="a" style="left:6.22px;top:840px;font-size:9.30px;line-height:9.30px;font-weight:bold;color:#111;transform:scaleX(0.7964);transform-origin:0 0;">Present</div><div class="a" style="left:4.5px;top:855px;width:90px;height:18px;border:1px solid #b4b4b4;border-radius:2px;overflow:hidden;background:linear-gradient(#f2f2f2 0%,#ececec 42%,#d2d2d2 52%,#dcdcdc 100%)"><div style="position:absolute;left:0px;width:90px;top:0;height:100%;background:linear-gradient(#e2fae2 0%,#e2fae2 40%,#5cd65c 52%,#5cd65c 100%)"></div></div><div class="a" style="left:6.25px;top:861px;font-size:9.30px;line-height:9.30px;font-weight:bold;color:#111;transform:scaleX(0.7583);transform-origin:0 0;">Lock</div><div class="a" style="left:97.3px;top:833px;width:499px;height:18px;border:1px solid #b4b4b4;border-radius:2px;overflow:hidden;background:linear-gradient(#f2f2f2 0%,#ececec 42%,#d2d2d2 52%,#dcdcdc 100%)"><div style="position:absolute;left:0px;width:51px;top:0;height:100%;background:linear-gradient(#fdf6f6 0%,#fdf6f6 40%,#ebb4b4 52%,#ebb4b4 100%)"></div><div style="position:absolute;left:51px;width:160px;top:0;height:100%;background:linear-gradient(#fefee4 0%,#fefee4 40%,#eaea8a 52%,#eaea8a 100%)"></div></div><div class="a" style="left:99.32px;top:840px;font-size:9.30px;line-height:9.30px;font-weight:bold;color:#111;transform:scaleX(0.7966);transform-origin:0 0;">Level: 42%</div><div class="a" style="left:97.3px;top:855px;width:499px;height:18px;border:1px solid #b4b4b4;border-radius:2px;overflow:hidden;background:linear-gradient(#f2f2f2 0%,#ececec 42%,#d2d2d2 52%,#dcdcdc 100%)"><div style="position:absolute;left:0px;width:51px;top:0;height:100%;background:linear-gradient(#fdf6f6 0%,#fdf6f6 40%,#ebb4b4 52%,#ebb4b4 100%)"></div><div style="position:absolute;left:51px;width:200px;top:0;height:100%;background:linear-gradient(#fefee4 0%,#fefee4 40%,#eaea8a 52%,#eaea8a 100%)"></div><div style="position:absolute;left:251px;width:50px;top:0;height:100%;background:linear-gradient(#e2fae2 0%,#e2fae2 40%,#5cd65c 52%,#5cd65c 100%)"></div></div><div class="a" style="left:99.47px;top:861px;font-size:9.30px;line-height:9.30px;font-weight:bold;color:#111;transform:scaleX(0.8152);transform-origin:0 0;">Quality: 60%</div><div class="a" style="left:600.4px;top:833px;width:498px;height:18px;border:1px solid #b4b4b4;border-radius:2px;overflow:hidden;background:linear-gradient(#f2f2f2 0%,#ececec 42%,#d2d2d2 52%,#dcdcdc 100%)"><div style="position:absolute;left:0px;width:107px;top:0;height:100%;background:linear-gradient(#fdf6f6 0%,#fdf6f6 40%,#ebb4b4 52%,#ebb4b4 100%)"></div><div style="position:absolute;left:107px;width:107px;top:0;height:100%;background:linear-gradient(#fefee4 0%,#fefee4 40%,#eaea8a 52%,#eaea8a 100%)"></div></div><div class="a" style="left:602.44px;top:840px;font-size:9.30px;line-height:9.30px;font-weight:bold;color:#111;transform:scaleX(0.7737);transform-origin:0 0;">BER: 1,2E-3</div><div class="a" style="left:600.4px;top:855px;width:498px;height:18px;border:1px solid #b4b4b4;border-radius:2px;overflow:hidden;background:linear-gradient(#f2f2f2 0%,#ececec 42%,#d2d2d2 52%,#dcdcdc 100%)"><div style="position:absolute;left:0px;width:135px;top:0;height:100%;background:linear-gradient(#fdf6f6 0%,#fdf6f6 40%,#ebb4b4 52%,#ebb4b4 100%)"></div><div style="position:absolute;left:135px;width:77px;top:0;height:100%;background:linear-gradient(#fefee4 0%,#fefee4 40%,#eaea8a 52%,#eaea8a 100%)"></div></div><div class="a" style="left:602.65px;top:861px;font-size:9.30px;line-height:9.30px;font-weight:bold;color:#111;transform:scaleX(0.8217);transform-origin:0 0;">SNR: 8,5 dB (Margin: 3,0 dB | Poor)</div><div class="a" style="left:1102.4px;top:833px;width:90.5px;height:18px;border:1px solid #b4b4b4;border-radius:2px;overflow:hidden;background:linear-gradient(#f2f2f2 0%,#ececec 42%,#d2d2d2 52%,#dcdcdc 100%)"><div style="position:absolute;left:0px;width:90.5px;top:0;height:100%;background:linear-gradient(#e2fae2 0%,#e2fae2 40%,#5cd65c 52%,#5cd65c 100%)"></div></div><div class="a" style="left:1104.38px;top:840px;font-size:9.30px;line-height:9.30px;font-weight:bold;color:#111;transform:scaleX(0.8721);transform-origin:0 0;">Input (~36,35 Mbps)</div><div class="a" style="left:1102.4px;top:855px;width:90.5px;height:18px;border:1px solid #b4b4b4;border-radius:2px;overflow:hidden;background:linear-gradient(#f2f2f2 0%,#ececec 42%,#d2d2d2 52%,#dcdcdc 100%)"><div style="position:absolute;left:0px;width:90.5px;top:0;height:100%;background:linear-gradient(#e2fae2 0%,#e2fae2 40%,#5cd65c 52%,#5cd65c 100%)"></div></div><div class="a" style="left:1104.67px;top:861px;font-size:9.30px;line-height:9.30px;font-weight:bold;color:#111;transform:scaleX(0.7694);transform-origin:0 0;">Sync TS</div><div class="a" style="left:0;top:878px;width:1200px;height:1px;background:#dedede"></div><div class="a" style="left:0;top:879px;width:1200px;height:21px;background:#fdfdfd"></div><div class="a" style="left:391px;top:881px;width:1px;height:18px;background:#a0a0a0"></div><div class="a" style="left:791px;top:881px;width:1px;height:18px;background:#a0a0a0"></div><div class="a" style="left:1188.5px;top:881px;width:1px;height:18px;background:#a0a0a0"></div><div class="a" style="left:141.96px;top:886px;font-size:10.47px;line-height:10.47px;color:#111;transform:scaleX(0.8256);transform-origin:0 0;-webkit-text-stroke:0.3px #111;">Locked -&gt; Uptime: 50:50:10</div><div class="a" style="left:538.91px;top:886px;font-size:10.47px;line-height:10.47px;color:#111;transform:scaleX(0.7826);transform-origin:0 0;-webkit-text-stroke:0.3px #111;">SYNC 54 | TEI 205 | CC 3858</div><div class="a" style="left:915.95px;top:886px;font-size:10.47px;line-height:10.47px;color:#111;transform:scaleX(0.8290);transform-origin:0 0;-webkit-text-stroke:0.3px #111;">Best signal: 9,0 dB (2025-04-22 04:08)</div><svg class="a" style="left:1190px;top:888px" width="10" height="12"><g fill="#999"><rect x="6" y="0" width="1.5" height="1.5"/><rect x="3" y="4" width="1.5" height="1.5"/><rect x="6" y="4" width="1.5" height="1.5"/><rect x="0" y="8" width="1.5" height="1.5"/><rect x="3" y="8" width="1.5" height="1.5"/><rect x="6" y="8" width="1.5" height="1.5"/></g></svg><div class="a" style="left:573px;top:70.5px;width:54px;height:51px;background:#fff"></div><svg class="a" style="left:573px;top:70.5px" width="54" height="51" viewBox="0 0 54 51">
<path d="M9.7 42.5 A23.7 23 0 0 1 42.6 8.6" fill="none" stroke="#1f2a80" stroke-width="1.5"/>
<path d="M43.7 10.8 A23.7 23 0 0 1 50.5 29.2" fill="none" stroke="#1f2a80" stroke-width="1.6"/>
<path d="M49.8 31.3 A23.7 23 0 0 1 44 42.5" fill="none" stroke="#1f2a80" stroke-width="1.5"/>
<path d="M9.2 42.5 L44.5 42.5" stroke="#1f2a80" stroke-width="1.2"/>
<path d="M42.6 13.3 Q47.5 19 47.6 26.3" fill="none" stroke="#c01818" stroke-width="1.7"/>
<path d="M39.7 16.9 Q43.5 20 44 24.8" fill="none" stroke="#c01818" stroke-width="1.7"/>
<path d="M19.2 6.8 L31.4 40 M19.2 6.8 L21.5 30 L17 33.5" fill="none" stroke="#2a3480" stroke-width="1.2"/>
<circle cx="16.2" cy="32.5" r="1.8" fill="none" stroke="#3a4690" stroke-width="0.8"/>
<path d="M15 34 L11 42.3 L22 42.3 L18 34.5 Z" fill="#b8bcd8" stroke="#2a3480" stroke-width="0.9"/>
<path d="M28 23 L36 23 L31 27" fill="none" stroke="#6a74aa" stroke-width="0.8"/>
<text x="2.2" y="49.6" font-family="Liberation Serif" font-weight="bold" font-size="7.8" fill="#1f2a80" stroke="#1f2a80" stroke-width="0.3" textLength="50.6" lengthAdjust="spacingAndGlyphs"><tspan fill="#c02020" stroke="#c02020">DX</tspan>SATCS.COM</text>
</svg></body></html>
